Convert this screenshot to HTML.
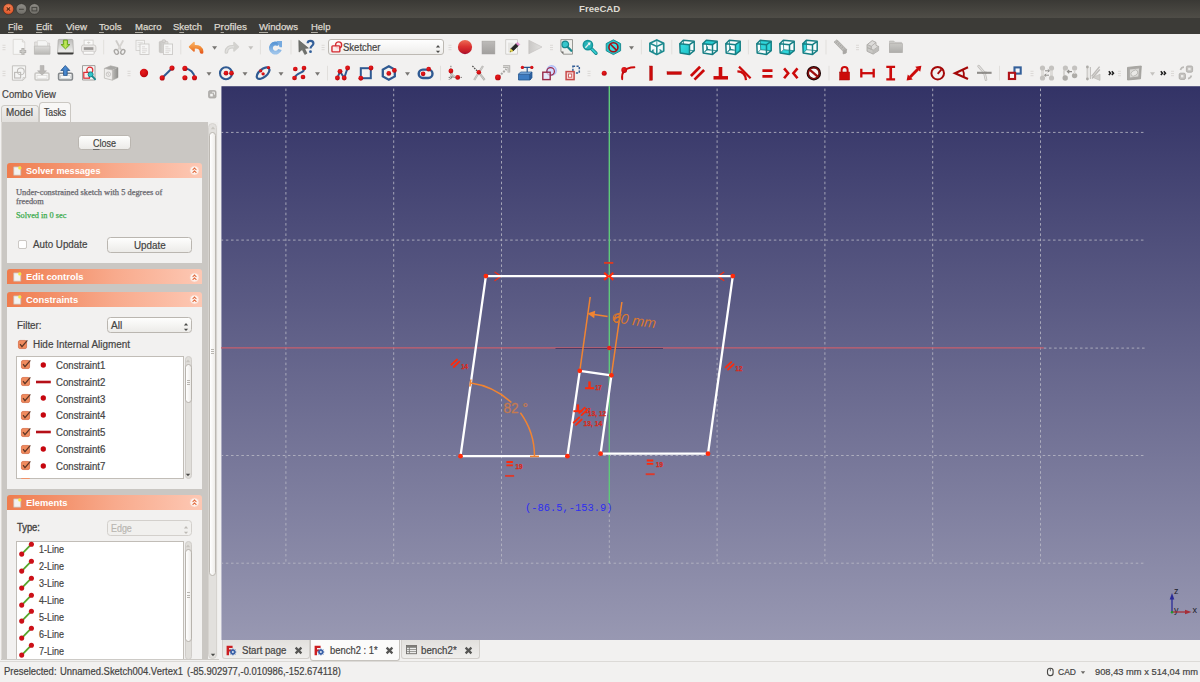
<!DOCTYPE html>
<html><head><meta charset="utf-8"><title>FreeCAD</title>
<style>html,body{margin:0;padding:0}body{width:1200px;height:682px;position:relative;overflow:hidden;background:#f2f1f0;font-family:"Liberation Sans",sans-serif}u{text-decoration:underline;text-underline-offset:1.7px;text-decoration-thickness:1px}</style></head>
<body>
<div style="position:absolute;left:0px;top:0px;width:1200px;height:18px;background:linear-gradient(#3a3935,#4f4d47);"></div>
<div style="position:absolute;left:0px;top:18px;width:1200px;height:16px;background:#3c3b37;"></div>
<svg style="position:absolute;left:0;top:0" width="50" height="18" viewBox="0 0 50 18"><defs><radialGradient id="cb" cx="0.5" cy="0.35" r="0.7"><stop offset="0" stop-color="#f58a5e"/><stop offset="1" stop-color="#dc4a1c"/></radialGradient><linearGradient id="gb" x1="0" y1="0" x2="0" y2="1"><stop offset="0" stop-color="#8f8d87"/><stop offset="1" stop-color="#6f6d67"/></linearGradient></defs><circle cx="8.4" cy="9" r="5.4" fill="url(#cb)" stroke="#3f2b22" stroke-width="0.7"/><path d="M6.7,7.3 L10.1,10.7 M10.1,7.3 L6.7,10.7" stroke="#5c2c14" stroke-width="1.15"/><circle cx="21.4" cy="9" r="5.35" fill="url(#gb)" stroke="#35342f" stroke-width="0.7"/><path d="M19,9.3 L23.8,9.3" stroke="#484742" stroke-width="1.1"/><circle cx="34.4" cy="9" r="5.35" fill="url(#gb)" stroke="#35342f" stroke-width="0.7"/><rect x="32" y="7.4" width="4.8" height="3.5" fill="none" stroke="#484742" stroke-width="1.05"/></svg>
<div style="position:absolute;left:579.00px;top:0.00px;height:18px;line-height:18px;font-family:'Liberation Sans', sans-serif;font-size:9px;color:#dfdbd2;white-space:pre;transform:scaleX(1.0725);transform-origin:0 50%;font-weight:700;">FreeCAD</div>
<div style="position:absolute;left:8.40px;top:18.00px;height:18px;line-height:18px;font-family:'Liberation Sans', sans-serif;font-size:9.3px;color:#dcd8cf;white-space:pre;transform:scaleX(0.9809);transform-origin:0 50%;-webkit-text-stroke:0.25px;"><u style="text-decoration-color:#aeaba3">F</u>ile</div>
<div style="position:absolute;left:36.00px;top:18.00px;height:18px;line-height:18px;font-family:'Liberation Sans', sans-serif;font-size:9.3px;color:#dcd8cf;white-space:pre;-webkit-text-stroke:0.25px;"><u style="text-decoration-color:#aeaba3">E</u>dit</div>
<div style="position:absolute;left:66.00px;top:18.00px;height:18px;line-height:18px;font-family:'Liberation Sans', sans-serif;font-size:9.3px;color:#dcd8cf;white-space:pre;transform:scaleX(1.0505);transform-origin:0 50%;-webkit-text-stroke:0.25px;"><u style="text-decoration-color:#aeaba3">V</u>iew</div>
<div style="position:absolute;left:99.40px;top:18.00px;height:18px;line-height:18px;font-family:'Liberation Sans', sans-serif;font-size:9.3px;color:#dcd8cf;white-space:pre;transform:scaleX(1.0456);transform-origin:0 50%;-webkit-text-stroke:0.25px;"><u style="text-decoration-color:#aeaba3">T</u>ools</div>
<div style="position:absolute;left:134.50px;top:18.00px;height:18px;line-height:18px;font-family:'Liberation Sans', sans-serif;font-size:9.3px;color:#dcd8cf;white-space:pre;transform:scaleX(1.0295);transform-origin:0 50%;-webkit-text-stroke:0.25px;"><u style="text-decoration-color:#aeaba3">M</u>acro</div>
<div style="position:absolute;left:172.70px;top:18.00px;height:18px;line-height:18px;font-family:'Liberation Sans', sans-serif;font-size:9.3px;color:#dcd8cf;white-space:pre;transform:scaleX(1.0200);transform-origin:0 50%;-webkit-text-stroke:0.25px;">S<u style="text-decoration-color:#aeaba3">k</u>etch</div>
<div style="position:absolute;left:214.00px;top:18.00px;height:18px;line-height:18px;font-family:'Liberation Sans', sans-serif;font-size:9.3px;color:#dcd8cf;white-space:pre;transform:scaleX(1.0641);transform-origin:0 50%;-webkit-text-stroke:0.25px;">P<u style="text-decoration-color:#aeaba3">r</u>ofiles</div>
<div style="position:absolute;left:259.00px;top:18.00px;height:18px;line-height:18px;font-family:'Liberation Sans', sans-serif;font-size:9.3px;color:#dcd8cf;white-space:pre;transform:scaleX(1.0337);transform-origin:0 50%;-webkit-text-stroke:0.25px;"><u style="text-decoration-color:#aeaba3">W</u>indows</div>
<div style="position:absolute;left:310.70px;top:18.00px;height:18px;line-height:18px;font-family:'Liberation Sans', sans-serif;font-size:9.3px;color:#dcd8cf;white-space:pre;transform:scaleX(1.0195);transform-origin:0 50%;-webkit-text-stroke:0.25px;"><u style="text-decoration-color:#aeaba3">H</u>elp</div>
<div style="position:absolute;left:0px;top:34px;width:1200px;height:52px;background:#f2f1f0;"></div>
<svg style="position:absolute;left:0;top:34px" width="1200" height="52" viewBox="0 34 1200 52"><defs>
<radialGradient id="rdot" cx="0.4" cy="0.35" r="0.75"><stop offset="0" stop-color="#ea1c1c"/><stop offset="0.7" stop-color="#c80a10"/><stop offset="1" stop-color="#a0060c"/></radialGradient>
<linearGradient id="ggrey" x1="0" y1="0" x2="0" y2="1"><stop offset="0" stop-color="#e3e2e0"/><stop offset="1" stop-color="#c4c3c0"/></linearGradient>
<linearGradient id="gfold" x1="0" y1="0" x2="0" y2="1"><stop offset="0" stop-color="#dddcda"/><stop offset="1" stop-color="#b9b8b5"/></linearGradient>
<linearGradient id="gdrive" x1="0" y1="0" x2="0" y2="1"><stop offset="0" stop-color="#bdbcba"/><stop offset="0.55" stop-color="#d9d9d7"/><stop offset="1" stop-color="#f0f0ee"/></linearGradient>
<linearGradient id="ggreen" x1="0" y1="0" x2="1" y2="0"><stop offset="0" stop-color="#86c626"/><stop offset="0.5" stop-color="#bfe65a"/><stop offset="1" stop-color="#86c626"/></linearGradient>
<linearGradient id="gclip" x1="0" y1="0" x2="1" y2="0"><stop offset="0" stop-color="#c6c5c2"/><stop offset="1" stop-color="#e2e1df"/></linearGradient>
<linearGradient id="gcy" x1="0" y1="0" x2="1" y2="1"><stop offset="0" stop-color="#3ae0e4"/><stop offset="1" stop-color="#1cc0c6"/></linearGradient>
<linearGradient id="ggrp" x1="0" y1="0" x2="0" y2="1"><stop offset="0" stop-color="#c9c8c5"/><stop offset="1" stop-color="#aeadaa"/></linearGradient>
<linearGradient id="gbarrow" x1="0" y1="0" x2="1" y2="0"><stop offset="0" stop-color="#2f6cb4"/><stop offset="0.5" stop-color="#4a8ad0"/><stop offset="1" stop-color="#2f6cb4"/></linearGradient>
<linearGradient id="gmap" x1="0" y1="0" x2="1" y2="0"><stop offset="0" stop-color="#bdbcb9"/><stop offset="1" stop-color="#8f8e8b"/></linearGradient>
<linearGradient id="gor" gradientUnits="userSpaceOnUse" x1="0" y1="-5" x2="0" y2="6"><stop offset="0" stop-color="#f8b066"/><stop offset="0.5" stop-color="#f08a36"/><stop offset="1" stop-color="#e4521a"/></linearGradient>
<linearGradient id="gblu" x1="0" y1="0" x2="0" y2="1"><stop offset="0" stop-color="#5a97d6"/><stop offset="1" stop-color="#9cc3ea"/></linearGradient>
<linearGradient id="grec" x1="0" y1="0" x2="0" y2="1"><stop offset="0" stop-color="#ec6c56"/><stop offset="0.45" stop-color="#dc3432"/><stop offset="0.8" stop-color="#c41c28"/><stop offset="1" stop-color="#a01034"/></linearGradient>
<linearGradient id="gstop" x1="0" y1="0" x2="0" y2="1"><stop offset="0" stop-color="#bdbbb9"/><stop offset="1" stop-color="#a19f9d"/></linearGradient>
<linearGradient id="gstop2" x1="0" y1="0" x2="1" y2="0"><stop offset="0" stop-color="#c9c7c5"/><stop offset="1" stop-color="#e3e2e0"/></linearGradient>
</defs><g transform="translate(4,47)"><path d="M-1.5,-1.7 H1.5 M-1.5,0.5 H1.5 M-1.5,2.7 H1.5" stroke="#d9d7d4" stroke-width="0.9"/></g>
<g transform="translate(20,47)"><path d="M-6.8,-7.6 H2.4 L4.8,-5 V7.4 H-6.8 Z" fill="#f6f6f5" stroke="#dad8d5" stroke-width="0.9"/><path d="M2.4,-7.6 V-5 H4.8" fill="#eeedeb" stroke="#d3d1ce" stroke-width="0.8"/><path d="M2.9,1.1 V7.7 M-0.4,4.4 H6.2" stroke="#b3b1ae" stroke-width="3"/><path d="M2.9,1.9 V6.9 M0.4,4.4 H5.4" stroke="#cbcac7" stroke-width="1.3"/></g>
<g transform="translate(42,47)"><path d="M-7.4,-5 H-3 L-2,-3.8 H7.6 V7 H-7.4 Z" fill="#e3e2e0" stroke="#cfcdca" stroke-width="0.8"/><path d="M-4.6,-6.4 H3.4 L5.5,-4.4 V0 H-4.6 Z" fill="#f5f5f4" stroke="#d6d4d1" stroke-width="0.7"/><path d="M-7.6,-0.9 H8 V7.2 H-7.6 Z" fill="url(#gfold)" stroke="#b9b7b4" stroke-width="0.7"/></g>
<g transform="translate(65.2,47)"><path d="M-6.2,-7.6 H6.8 Q7.6,-7.6 7.7,-6.6 L8.2,5.6 H-7.6 L-7,-6.6 Q-7,-7.6 -6.2,-7.6 Z" fill="url(#gdrive)" stroke="#a5a4a1" stroke-width="0.7"/><path d="M-7.7,5.5 H8.3 V6.3 Q8.3,7.5 7,7.5 H-6.4 Q-7.7,7.5 -7.7,6.3 Z" fill="#3c3c3a"/><path d="M-7,5.4 H7.6" stroke="#9d9c99" stroke-width="0.6"/><path d="M-1.8,-6.9 H2.3 V-2.5 H4.7 L0.25,1.9 L-4.2,-2.5 H-1.8 Z" fill="url(#ggreen)" stroke="#62a01a" stroke-width="0.9" stroke-linejoin="round"/></g>
<g transform="translate(88.5,47)"><rect x="-4.4" y="-6.9" width="9" height="6" fill="#fafaf9" stroke="#cfcdca" stroke-width="0.8"/><path d="M-1.4,-4.4 H1.8 M0.2,-5.4 V-3.2" stroke="#d0cecb" stroke-width="0.9"/><rect x="-7" y="-2" width="14.4" height="7.2" rx="2" fill="#eceae8" stroke="#c6c4c1" stroke-width="0.8"/><rect x="-4.7" y="0.2" width="9.6" height="2.7" fill="#9d9b98"/><rect x="-5.2" y="4.2" width="10.8" height="3.1" rx="0.6" fill="#fbfbfa" stroke="#c6c4c1" stroke-width="0.8"/></g>
<g transform="translate(103.7,47)"><path d="M0,-7.2 V7.4" stroke="#e1dfdc" stroke-width="1"/></g>
<g transform="translate(119,47)"><path d="M-3,-6.6 L2,2.6" stroke="#cdcbc8" stroke-width="1.9" fill="none"/><path d="M4.2,-6.6 L-0.8,2.6" stroke="#d6d4d1" stroke-width="1.9" fill="none"/><ellipse cx="-2.6" cy="4.9" rx="1.9" ry="2.5" fill="none" stroke="#a9a7a4" stroke-width="1.4" transform="rotate(-28 -2.6 4.9)"/><ellipse cx="3.8" cy="4.9" rx="1.9" ry="2.5" fill="none" stroke="#a9a7a4" stroke-width="1.4" transform="rotate(28 3.8 4.9)"/></g>
<g transform="translate(142,47)"><rect x="-6" y="-6.7" width="8.5" height="10.2" fill="#f4f4f3" stroke="#cfcdca" stroke-width="0.8"/><path d="M-4.4,-4.4 H0.8 M-4.4,-2.4 H0.8 M-4.4,-0.4 H-2.4" stroke="#dad8d5" stroke-width="0.8"/><rect x="-2" y="-3" width="9" height="10.4" fill="#f6f6f5" stroke="#c7c5c2" stroke-width="0.8"/><path d="M0,-0.2 H3 M0,1.8 H5.2 M0,3.8 H5.2 M0,5.6 H3.6" stroke="#d3d1ce" stroke-width="0.8"/></g>
<g transform="translate(165,47)"><rect x="-5.7" y="-5.6" width="8.6" height="11.2" rx="1" fill="url(#gclip)" stroke="#c1bfbc" stroke-width="0.7"/><rect x="-3" y="-7.2" width="3.6" height="2.6" rx="1" fill="#d8d7d4" stroke="#bdbbb8" stroke-width="0.6"/><rect x="-1.6" y="-3" width="9.2" height="10.4" fill="#f6f6f5" stroke="#c7c5c2" stroke-width="0.8"/><path d="M0.4,-0.2 H3.4 M0.4,1.8 H5.6 M0.4,3.8 H5.6 M0.4,5.6 H4" stroke="#d3d1ce" stroke-width="0.8"/></g>
<g transform="translate(180.8,47)"><path d="M0,-7.2 V7.4" stroke="#e1dfdc" stroke-width="1"/></g>
<g transform="translate(196,47)"><g transform="translate(0,0.6)"><path d="M5.6,4.4 C5.4,0.6 2.6,-1.2 -1.4,-0.8" fill="none" stroke="url(#gor)" stroke-width="3.7" stroke-linecap="round"/><path d="M-6.4,-0.8 L-2,-5 V3.4 Z" fill="url(#gor)" stroke="url(#gor)" stroke-width="1.6" stroke-linejoin="round"/></g></g>
<g transform="translate(214.6,47.5)"><path d="M-2.5,-1.3 H2.5 L0,2.3 Z" fill="#777572"/></g>
<g transform="translate(232,47)"><g transform="translate(0,0.6) scale(-1,1)"><path d="M5.6,4.4 C5.4,0.6 2.6,-1.2 -1.4,-0.8" fill="none" stroke="#cfcecb" stroke-width="3.7" stroke-linecap="round"/><path d="M-6.4,-0.8 L-2,-5 V3.4 Z" fill="#d3d2cf" stroke="#d3d2cf" stroke-width="1.6" stroke-linejoin="round"/><path d="M5.6,4.4 C5.4,0.6 2.6,-1.2 -1.4,-0.8" fill="none" stroke="#e0dfdd" stroke-width="1.6" stroke-linecap="round"/></g></g>
<g transform="translate(250.8,47.5)"><path d="M-2.5,-1.3 H2.5 L0,2.3 Z" fill="#c4c2bf"/></g>
<g transform="translate(260.4,47)"><path d="M0,-7.2 V7.4" stroke="#e1dfdc" stroke-width="1"/></g>
<g transform="translate(275,47)"><g transform="translate(0.3,0.9)"><path d="M3.4,-3.2 A4.6,4.6 0 1 0 4.6,1.6" fill="none" stroke="url(#gblu)" stroke-width="3.9"/><path d="M1.2,-6.9 H6.7 V-0.6 H4.4 Z" fill="#76aadf"/></g></g>
<g transform="translate(291,47)"><path d="M0,-7.2 V7.4" stroke="#e1dfdc" stroke-width="1"/></g>
<g transform="translate(307,47)"><g transform="translate(0,0.7)"><path d="M-8.2,-7.4 L-8,4.4 L-4.8,1.8 L-2.2,6.8 L0,5.6 L-2.4,0.8 L1.4,0.4 Z" fill="#70726e" stroke="#5a5c58" stroke-width="0.6"/><path d="M0.6,-4.4 C0.8,-7.6 6.4,-7.6 6.4,-4.2 C6.4,-2 3.5,-1.8 3.5,0.8" fill="none" stroke="#34609a" stroke-width="2.2"/><circle cx="3.5" cy="4" r="1.4" fill="#34609a"/></g></g>
<g transform="translate(323.1,47)"><path d="M-1.5,-1.7 H1.5 M-1.5,0.5 H1.5 M-1.5,2.7 H1.5" stroke="#d9d7d4" stroke-width="0.9"/></g>
<g transform="translate(450,47)"><path d="M-1.5,-1.7 H1.5 M-1.5,0.5 H1.5 M-1.5,2.7 H1.5" stroke="#d9d7d4" stroke-width="0.9"/></g>
<g transform="translate(465,47)"><circle cx="0" cy="0.1" r="7.1" fill="url(#grec)"/></g>
<g transform="translate(488.45,47)"><rect x="-6.45" y="-5.9" width="12.9" height="12.9" fill="url(#gstop)" stroke="#a3a19e" stroke-width="0.5"/></g>
<g transform="translate(512.5,47)"><path d="M-6.8,-7.4 H5 V7.2 H-6.8 Z" fill="#f6f6f5" stroke="#d2d0cd" stroke-width="1"/><rect x="-4.6" y="-4.4" width="5.6" height="9.6" fill="#e6e5e3"/><path d="M3.6,-3.4 L5.8,-1.2 L0.6,4 L-1.6,1.8 Z" fill="#262626" stroke="#262626" stroke-width="0.8" stroke-linejoin="round"/><path d="M3.6,-3.4 L5,-4.8 L7.2,-2.6 L5.8,-1.2 Z" fill="#e58fd0" stroke="#d47cc0" stroke-width="0.5"/><path d="M-1.6,1.8 L0.6,4 L-2.6,5.2 Z" fill="#e8d848" stroke="#c9b930" stroke-width="0.5"/><path d="M-2.6,5.2 L-1.9,4 L-1.5,4.8 Z" fill="#333"/></g>
<g transform="translate(535,47)"><path d="M-6.2,-6.8 L7,0 L-6.2,6.8 Z" fill="url(#gstop2)" stroke="#c2c0bd" stroke-width="0.6"/></g>
<g transform="translate(551.5,47)"><path d="M-1.5,-1.7 H1.5 M-1.5,0.5 H1.5 M-1.5,2.7 H1.5" stroke="#d9d7d4" stroke-width="0.9"/></g>
<g transform="translate(566.9,47)"><path d="M-6,-7.4 H5.6 V7.2 H-3.4 L-6,4.6 Z" fill="#efefec" stroke="#8f8e8a" stroke-width="0.9"/><path d="M-6,4.6 H-3.4 V7.2 Z" fill="#6c6b68"/><circle cx="-1.6" cy="-2.6" r="3.3" fill="#34c6cb" stroke="#17888d" stroke-width="1.2"/><path d="M0.8,0 L4.4,3.8" stroke="#17888d" stroke-width="2.2" stroke-linecap="round"/></g>
<g transform="translate(590,47)"><path d="M1.4,1.6 L6,6.2" stroke="#16898e" stroke-width="3.4" stroke-linecap="round"/><path d="M1.6,1.8 L5.9,6.1" stroke="#35cdd2" stroke-width="1.7" stroke-linecap="round"/><circle cx="-2.1" cy="-1.85" r="4.6" fill="#27b4b9" stroke="#169499" stroke-width="1.5"/><path d="M-4.6,0.8 L-0.6,-3.6" stroke="#e8eeee" stroke-width="1.3"/><path d="M0.6,-4.8 L0,-1.6 L-2.6,-4.2 Z" fill="#f2f6f6"/></g>
<g transform="translate(613,47)"><g transform="translate(0.4,0.2)"><path d="M0,-7.4 L7.2,-3.6 V3.6 L0,7.4 L-7.2,3.6 V-3.6 Z" fill="#25c4c9" stroke="#14868b" stroke-width="0.9"/><circle cx="0" cy="0" r="4.5" fill="#3addE2" stroke="#a51016" stroke-width="1.6"/><path d="M-3.2,-3.2 L3.2,3.2" stroke="#a51016" stroke-width="1.6"/></g></g>
<g transform="translate(631.5,47.5)"><path d="M-2.5,-1.3 H2.5 L0,2.3 Z" fill="#777572"/></g>
<g transform="translate(641.4,47)"><path d="M0,-7.2 V7.4" stroke="#e1dfdc" stroke-width="1"/></g>
<g transform="translate(656,47)"><g transform="translate(0.8,0.2)"><path d="M0,-7.3 L6.9,-3.9 V3.9 L0,7.3 L-6.9,3.9 V-3.9 Z" fill="#f6fbfb" stroke="#1d8a8f" stroke-width="1.7" stroke-linejoin="round"/><path d="M-6.9,-3.9 L0,-0.7 L6.9,-3.9 M0,-0.7 V7.3" stroke="#1d8a8f" stroke-width="1.5" fill="none"/><path d="M0,-7.3 V-0.7" stroke="#1d8a8f" stroke-width="0.8"/><path d="M-4.8,4.2 L-2.6,2.4 M-4.8,4.2 L-3.8,2.2 M-4.8,4.2 L-2.6,4 M4.8,4.2 L2.6,2.4 M4.8,4.2 L3.8,2.2 M4.8,4.2 L2.6,4" stroke="#1d8a8f" stroke-width="0.9"/></g></g>
<g transform="translate(671.8,47)"><path d="M0,-7.2 V7.4" stroke="#e1dfdc" stroke-width="1"/></g>
<g transform="translate(687,47)"><g transform="translate(0,0.2)"><path d="M-7.2,-3.5 L-3.7,-6.9 L7.2,-5.9 L7.2,3.5 L2.5,7.2 L-6.8,5.8 Z" fill="#f8fcfc"/><path d="M-6.8,5.8 L-3.3,2.5 L7.2,3.5 M-3.3,2.5 L-3.7,-6.9" stroke="#167f84" stroke-width="0.8" fill="none"/><path d="M-7.2,-3.5 L2.5,-2.5 L2.5,7.2 L-6.8,5.8 Z" fill="url(#gcy)"/><path d="M-7.2,-3.5 L2.5,-2.5 L2.5,7.2 L-6.8,5.8 Z" fill="none" stroke="#167f84" stroke-width="1.5" stroke-linejoin="round"/><path d="M-7.2,-3.5 L-3.7,-6.9 L7.2,-5.9 L7.2,3.5 L2.5,7.2 M2.5,-2.5 L7.2,-5.9" stroke="#167f84" stroke-width="1.5" fill="none" stroke-linejoin="round"/></g></g>
<g transform="translate(710,47)"><g transform="translate(0,0.2)"><path d="M-7.2,-3.5 L-3.7,-6.9 L7.2,-5.9 L7.2,3.5 L2.5,7.2 L-6.8,5.8 Z" fill="#f8fcfc"/><path d="M-6.8,5.8 L-3.3,2.5 L7.2,3.5 M-3.3,2.5 L-3.7,-6.9" stroke="#167f84" stroke-width="0.8" fill="none"/><path d="M-7.2,-3.5 L-3.7,-6.9 L7.2,-5.9 L2.5,-2.5 Z" fill="url(#gcy)"/><path d="M-2.6,2.2 L-5,4.4 M-2.6,2.2 L-2.6,-0.8 M-2.6,2.2 L0.6,2.8" stroke="#167f84" stroke-width="0.9" fill="none"/><circle cx="-2.6" cy="2.2" r="0.9" fill="#167f84"/><path d="M-7.2,-3.5 L2.5,-2.5 L2.5,7.2 L-6.8,5.8 Z" fill="none" stroke="#167f84" stroke-width="1.5" stroke-linejoin="round"/><path d="M-7.2,-3.5 L-3.7,-6.9 L7.2,-5.9 L7.2,3.5 L2.5,7.2 M2.5,-2.5 L7.2,-5.9" stroke="#167f84" stroke-width="1.5" fill="none" stroke-linejoin="round"/></g></g>
<g transform="translate(733,47)"><g transform="translate(0,0.2)"><path d="M-7.2,-3.5 L-3.7,-6.9 L7.2,-5.9 L7.2,3.5 L2.5,7.2 L-6.8,5.8 Z" fill="#f8fcfc"/><path d="M-6.8,5.8 L-3.3,2.5 L7.2,3.5 M-3.3,2.5 L-3.7,-6.9" stroke="#167f84" stroke-width="0.8" fill="none"/><path d="M2.5,-2.5 L7.2,-5.9 L7.2,3.5 L2.5,7.2 Z" fill="url(#gcy)"/><path d="M-2.6,2.2 L-5,4.4 M-2.6,2.2 L-2.6,-0.8 M-2.6,2.2 L0.6,2.8" stroke="#167f84" stroke-width="0.9" fill="none"/><circle cx="-2.6" cy="2.2" r="0.9" fill="#167f84"/><path d="M-7.2,-3.5 L2.5,-2.5 L2.5,7.2 L-6.8,5.8 Z" fill="none" stroke="#167f84" stroke-width="1.5" stroke-linejoin="round"/><path d="M-7.2,-3.5 L-3.7,-6.9 L7.2,-5.9 L7.2,3.5 L2.5,7.2 M2.5,-2.5 L7.2,-5.9" stroke="#167f84" stroke-width="1.5" fill="none" stroke-linejoin="round"/></g></g>
<g transform="translate(748.4,47)"><path d="M0,-7.2 V7.4" stroke="#e1dfdc" stroke-width="1"/></g>
<g transform="translate(764,47)"><g transform="translate(0,0.2)"><path d="M-7.2,-3.5 L-3.7,-6.9 L7.2,-5.9 L7.2,3.5 L2.5,7.2 L-6.8,5.8 Z" fill="#f8fcfc"/><path d="M-3.7,-6.9 L7.2,-5.9 L7.2,3.5 L-3.3,2.5 Z" fill="#2fd6db"/><path d="M-6.8,5.8 L-3.3,2.5 L7.2,3.5 M-3.3,2.5 L-3.7,-6.9" stroke="#167f84" stroke-width="0.8" fill="none"/><path d="M-7.2,-3.5 L2.5,-2.5 L2.5,7.2 L-6.8,5.8 Z" fill="none" stroke="#167f84" stroke-width="1.5" stroke-linejoin="round"/><path d="M-7.2,-3.5 L-3.7,-6.9 L7.2,-5.9 L7.2,3.5 L2.5,7.2 M2.5,-2.5 L7.2,-5.9" stroke="#167f84" stroke-width="1.5" fill="none" stroke-linejoin="round"/></g></g>
<g transform="translate(787,47)"><g transform="translate(0,0.2)"><path d="M-7.2,-3.5 L-3.7,-6.9 L7.2,-5.9 L7.2,3.5 L2.5,7.2 L-6.8,5.8 Z" fill="#f8fcfc"/><path d="M-6.8,5.8 L-3.3,2.5 L7.2,3.5 L2.5,7.2 Z" fill="#2fd6db"/><path d="M-6.8,5.8 L-3.3,2.5 L7.2,3.5 M-3.3,2.5 L-3.7,-6.9" stroke="#167f84" stroke-width="0.8" fill="none"/><path d="M-7.2,-3.5 L2.5,-2.5 L2.5,7.2 L-6.8,5.8 Z" fill="none" stroke="#167f84" stroke-width="1.5" stroke-linejoin="round"/><path d="M-7.2,-3.5 L-3.7,-6.9 L7.2,-5.9 L7.2,3.5 L2.5,7.2 M2.5,-2.5 L7.2,-5.9" stroke="#167f84" stroke-width="1.5" fill="none" stroke-linejoin="round"/></g></g>
<g transform="translate(810,47)"><g transform="translate(0,0.2)"><path d="M-7.2,-3.5 L-3.7,-6.9 L7.2,-5.9 L7.2,3.5 L2.5,7.2 L-6.8,5.8 Z" fill="#f8fcfc"/><path d="M-7.2,-3.5 L-3.7,-6.9 L-3.3,2.5 L-6.8,5.8 Z" fill="#2fd6db"/><path d="M-6.8,5.8 L-3.3,2.5 L7.2,3.5 M-3.3,2.5 L-3.7,-6.9" stroke="#167f84" stroke-width="0.8" fill="none"/><path d="M-7.2,-3.5 L2.5,-2.5 L2.5,7.2 L-6.8,5.8 Z" fill="none" stroke="#167f84" stroke-width="1.5" stroke-linejoin="round"/><path d="M-7.2,-3.5 L-3.7,-6.9 L7.2,-5.9 L7.2,3.5 L2.5,7.2 M2.5,-2.5 L7.2,-5.9" stroke="#167f84" stroke-width="1.5" fill="none" stroke-linejoin="round"/></g></g>
<g transform="translate(826,47)"><path d="M0,-7.2 V7.4" stroke="#e1dfdc" stroke-width="1"/></g>
<g transform="translate(840,47)"><path d="M-6,-5 L-3,-7.2 L6.6,2.4 L6.2,6 L3.2,7 L3,4.2 Z" fill="#bcbbb8" stroke="#a9a7a4" stroke-width="0.7" stroke-linejoin="round"/><path d="M3,4.2 L6.6,2.4" stroke="#a19f9c" stroke-width="0.7"/><path d="M-3.8,-4.4 L-2.4,-5.6 M-2,-2.6 L-0.6,-3.8 M-0.2,-0.8 L1.2,-2 M1.6,1 L3,-0.2 M3.4,2.8 L4.8,1.6" stroke="#9c9a97" stroke-width="0.7"/><path d="M3.2,7 L3,4.2 L6.6,2.4 L6.2,6 Z" fill="#a9a7a4"/></g>
<g transform="translate(857.5,47)"><path d="M-1.5,-1.7 H1.5 M-1.5,0.5 H1.5 M-1.5,2.7 H1.5" stroke="#d9d7d4" stroke-width="0.9"/></g>
<g transform="translate(872.5,47)"><g transform="translate(0.3,0.2)"><path d="M-5.6,-2.6 L-0.6,-6.6 L3.2,-4.8 V-1.8 L5.8,-0.8 V3.4 L0.4,6.8 L-5.6,4 Z" fill="#dddcda" stroke="#a9a7a4" stroke-width="0.9" stroke-linejoin="round"/><path d="M-5.6,-2.6 L-1.6,-0.8 L3.2,-4.8 M-1.6,-0.8 V2 L0.4,3 L5.8,-0.8 M0.4,3 V6.8 M-1.6,2 L-5.6,0.4" stroke="#a9a7a4" stroke-width="0.8" fill="none"/><path d="M-5.6,-2.6 L-1.6,-0.8 V2 L-5.6,0.4 Z M-5.6,0.4 L0.4,3 V6.8 L-5.6,4 Z" fill="#c9c8c5" stroke="#a9a7a4" stroke-width="0.6"/><path d="M0.4,3 L5.8,-0.8 V3.4 L0.4,6.8 Z" fill="#bdbcb9"/></g></g>
<g transform="translate(895,47)"><g transform="translate(1,0)"><path d="M-6.5,-6 H-2.2 L-1,-4.6 H5.6 V5.4 H-6.5 Z" fill="#c9c8c5" stroke="#b7b5b2" stroke-width="0.6"/><path d="M-6.5,-3.4 H6.5 V5.5 H-6.5 Z" fill="url(#ggrp)" stroke="#aeaca9" stroke-width="0.6"/></g></g>
<g transform="translate(4,73)"><path d="M-1.5,-1.7 H1.5 M-1.5,0.5 H1.5 M-1.5,2.7 H1.5" stroke="#d9d7d4" stroke-width="0.9"/></g>
<g transform="translate(19,73)"><path d="M-6.6,-7.2 H6.6 V4.6 L4,7.2 H-6.6 Z" fill="#f4f4f3" stroke="#c4c2bf" stroke-width="1"/><circle cx="1.8" cy="-1.6" r="3.4" fill="none" stroke="#bdbbb8" stroke-width="1.1"/><rect x="-4.4" y="-0.6" width="6" height="5.6" fill="none" stroke="#bdbbb8" stroke-width="1.1"/><path d="M4,7.2 V4.6 H6.6" fill="none" stroke="#c4c2bf" stroke-width="0.8"/></g>
<g transform="translate(42,73)"><rect x="-7" y="0" width="14" height="7" rx="1.2" fill="#f6f6f5" stroke="#c9c7c4" stroke-width="1.5"/><path d="M-1.8,-7.5 H2 V-2.2 H4.5 L0.1,2.2 L-4.5,-2.2 H-1.8 Z" fill="#b9b7b4" stroke="#adaba8" stroke-width="0.5"/><rect x="-5" y="2.6" width="10" height="2.6" fill="#fafaf9" stroke="#d6d4d1" stroke-width="0.6"/></g>
<g transform="translate(65.5,73)"><rect x="-6.9" y="0.2" width="13.8" height="6.8" rx="1.2" fill="#f4f5f5" stroke="#84888b" stroke-width="1.6"/><rect x="-4.8" y="2.8" width="9.6" height="2.4" fill="#fbfbfb" stroke="#b9bcbe" stroke-width="0.5"/><path d="M-2,2.4 H1.7 V-2.5 H4.3 L-0.2,-7.5 L-4.7,-2.5 H-2 Z" fill="url(#gbarrow)" stroke="#2a568c" stroke-width="0.8" stroke-linejoin="round"/></g>
<g transform="translate(89,73)"><path d="M-6.5,-7.4 H6 V7 H-6.5 Z" fill="#f4f4f3" stroke="#a19f9c" stroke-width="1"/><circle cx="0.8" cy="-2.8" r="3" fill="none" stroke="#dc2c32" stroke-width="1.2"/><rect x="-5.2" y="-0.6" width="5.6" height="5.8" fill="#fbeaea" stroke="#dc2c32" stroke-width="1.2"/><circle cx="1.6" cy="1.4" r="2.5" fill="#2fc5ca" stroke="#17888d" stroke-width="1"/><path d="M3.4,3.4 L6,6.2" stroke="#17888d" stroke-width="1.9" stroke-linecap="round"/></g>
<g transform="translate(111,73)"><path d="M-6.6,-4.6 L-0.4,-7.2 L7,-5.4 V4.6 L1.4,7.2 L-6.6,5.2 Z" fill="#efeeec" stroke="#bdbbb8" stroke-width="0.8" stroke-linejoin="round"/><path d="M-0.4,-7.2 L7,-5.4 L1.4,-3 L-6.6,-4.6 Z" fill="#a9a8a5"/><path d="M1.4,-3 L7,-5.4 V4.6 L1.4,7.2 Z" fill="url(#gmap)"/><path d="M-6.6,-4.6 L1.4,-3 V7.2" fill="none" stroke="#b7b5b2" stroke-width="0.7"/><circle cx="-2.6" cy="1.2" r="2.2" fill="none" stroke="#c4c2bf" stroke-width="0.9"/><path d="M-3.6,0.2 C-1.6,-0.4 -3.6,2.6 -1.6,2.2" stroke="#c4c2bf" stroke-width="0.8" fill="none"/></g>
<g transform="translate(129,73)"><path d="M-1.5,-1.7 H1.5 M-1.5,0.5 H1.5 M-1.5,2.7 H1.5" stroke="#d9d7d4" stroke-width="0.9"/></g>
<g transform="translate(144,73)"><circle cx="0" cy="0" r="4.15" fill="url(#rdot)"/></g>
<g transform="translate(167,73)"><path d="M-4.6,4.8 L5,-4.8" stroke="#2f5a92" stroke-width="2"/><circle cx="-4.8" cy="4.9" r="2.55" fill="url(#rdot)"/><circle cx="5" cy="-4.9" r="2.55" fill="url(#rdot)"/></g>
<g transform="translate(189.5,73)"><path d="M-4.6,-4.6 C0.6,-4.2 4.6,-0.6 5,4.8" stroke="#2f5a92" stroke-width="2" fill="none"/><circle cx="-4.6" cy="-4.6" r="2.55" fill="url(#rdot)"/><circle cx="-4.6" cy="4.8" r="2.55" fill="url(#rdot)"/><circle cx="5" cy="4.8" r="2.55" fill="url(#rdot)"/></g>
<g transform="translate(209,73.5)"><path d="M-2.5,-1.3 H2.5 L0,2.3 Z" fill="#777572"/></g>
<g transform="translate(226,73)"><circle cx="0" cy="0.2" r="6" fill="none" stroke="#2f5a92" stroke-width="2.1"/><circle cx="0" cy="0.2" r="2.35" fill="url(#rdot)"/><circle cx="5.5" cy="0.2" r="2.35" fill="url(#rdot)"/></g>
<g transform="translate(245,73.5)"><path d="M-2.5,-1.3 H2.5 L0,2.3 Z" fill="#777572"/></g>
<g transform="translate(262.5,73)"><g transform="translate(0.6,0.2)"><ellipse cx="0" cy="0" rx="7.6" ry="3.9" fill="none" stroke="#2f5a92" stroke-width="2.2" transform="rotate(-40)"/><circle cx="-2.4" cy="-2.4" r="1.65" fill="url(#rdot)"/><circle cx="0" cy="0.6" r="1.65" fill="url(#rdot)"/><circle cx="5.4" cy="-5.6" r="1.65" fill="url(#rdot)"/></g></g>
<g transform="translate(281,73.5)"><path d="M-2.5,-1.3 H2.5 L0,2.3 Z" fill="#777572"/></g>
<g transform="translate(299,73)"><g transform="translate(0.5,0.4)"><path d="M4.4,-3.6 C3.6,0.4 -2.6,-1.6 -4.6,4" stroke="#2f5a92" stroke-width="2" fill="none"/><circle cx="-4.2" cy="-4.4" r="2.35" fill="url(#rdot)"/><circle cx="4.5" cy="-5.4" r="2.35" fill="url(#rdot)"/><circle cx="-5" cy="4.6" r="2.35" fill="url(#rdot)"/><circle cx="3.5" cy="3.6" r="2.35" fill="url(#rdot)"/></g></g>
<g transform="translate(317.5,73.5)"><path d="M-2.5,-1.3 H2.5 L0,2.3 Z" fill="#777572"/></g>
<g transform="translate(327.5,73)"><path d="M0,-7.2 V7.4" stroke="#e1dfdc" stroke-width="1"/></g>
<g transform="translate(342.4,73)"><path d="M-5,5 L-2.4,-1.6 L1.8,5 L5.2,-5" stroke="#2f5a92" stroke-width="2" fill="none"/><circle cx="-5" cy="5" r="2.45" fill="url(#rdot)"/><circle cx="-2.4" cy="-1.6" r="2.45" fill="url(#rdot)"/><circle cx="1.8" cy="5" r="2.45" fill="url(#rdot)"/><circle cx="5.2" cy="-5" r="2.45" fill="url(#rdot)"/></g>
<g transform="translate(366,73)"><rect x="-5.2" y="-4.8" width="10" height="10" fill="none" stroke="#2f5a92" stroke-width="2"/><circle cx="-5.2" cy="5.2" r="2.45" fill="url(#rdot)"/><circle cx="5" cy="-5" r="2.45" fill="url(#rdot)"/></g>
<g transform="translate(389.8,73)"><path d="M-1,-6.8 L5,-3.4 V3.4 L-1,6.8 L-7,3.4 V-3.4 Z" fill="none" stroke="#2f5a92" stroke-width="2.3"/><circle cx="-1" cy="0.4" r="2.35" fill="url(#rdot)"/><circle cx="4.6" cy="-2.6" r="2.35" fill="url(#rdot)"/></g>
<g transform="translate(407.5,73.5)"><path d="M-2.5,-1.3 H2.5 L0,2.3 Z" fill="#777572"/></g>
<g transform="translate(425.7,73)"><rect x="-7" y="-3.4" width="13.8" height="8.4" rx="4.2" fill="none" stroke="#2f5a92" stroke-width="2.4"/><circle cx="-2.6" cy="0.8" r="2.35" fill="url(#rdot)"/><circle cx="3" cy="-3.8" r="2.35" fill="url(#rdot)"/></g>
<g transform="translate(440.5,73)"><path d="M0,-7.2 V7.4" stroke="#e1dfdc" stroke-width="1"/></g>
<g transform="translate(454.5,73)"><path d="M-3.6,-7.2 V6.8 M-5.8,4.4 H7.4" stroke="#55534f" stroke-width="0.8" stroke-dasharray="1.4 1"/><path d="M-3.6,-2 C-3.2,2 0,4.2 3.2,4.4" stroke="#a9a7a4" stroke-width="2.2" fill="none"/><path d="M-3.6,-2 C-3.2,2 0,4.2 3.2,4.4" stroke="#e4e3e1" stroke-width="0.8" fill="none"/><path d="M-5.6,6.8 L-1.6,2.6" stroke="#55534f" stroke-width="0.7" stroke-dasharray="1.2 0.8"/><circle cx="-3.6" cy="-2" r="2.4" fill="url(#rdot)"/><circle cx="3.2" cy="4.4" r="2.4" fill="url(#rdot)"/></g>
<g transform="translate(479,73)"><path d="M-0.2,-0.6 L5.6,7" stroke="#b1afab" stroke-width="2.2"/><path d="M4,-7 L-4.8,7" stroke="#b7b5b2" stroke-width="2.2"/><path d="M-0.2,-0.6 L5.4,6.8 M3.8,-6.6 L-4.6,6.8" stroke="#d9d8d5" stroke-width="0.7"/><path d="M-6.6,-7 L-1.6,-1.8" stroke="#4a4846" stroke-width="1.2" stroke-dasharray="1.6 1"/><circle cx="-0.2" cy="-0.8" r="2.25" fill="url(#rdot)"/></g>
<g transform="translate(502.5,73)"><path d="M-3.6,3.6 L4,-4" stroke="#a9a7a4" stroke-width="2" stroke-dasharray="2 1.1"/><path d="M0.6,-6.4 H6.4 V-0.6" fill="none" stroke="#a9a7a4" stroke-width="2.6"/><path d="M0.6,-6.4 H6.4 V-0.6" fill="none" stroke="#d6d5d2" stroke-width="1.1"/><circle cx="-4.6" cy="4.4" r="2.85" fill="url(#rdot)"/></g>
<g transform="translate(525,73)"><path d="M-6.5,1.2 H5 V7 H-6.5 Z" fill="#3d7cc2" stroke="#24558e" stroke-width="0.8"/><path d="M-6.5,1.2 L-4.4,-1 H7 L5,1.2 Z" fill="#7fb1e3" stroke="#24558e" stroke-width="0.7"/><path d="M5,1.2 L7,-1 V4.8 L5,7 Z" fill="#2d64a6" stroke="#24558e" stroke-width="0.7"/><path d="M-2.4,-5.6 H6.6 M2.2,-5.6 V-0.8" stroke="#24558e" stroke-width="1.2"/><circle cx="-2.6" cy="-5.6" r="1.65" fill="url(#rdot)"/><circle cx="6.8" cy="-5.6" r="1.65" fill="url(#rdot)"/></g>
<g transform="translate(549,73)"><circle cx="2.6" cy="-2.6" r="4.6" fill="#d4ddff" stroke="#aebcf6" stroke-width="1.4"/><circle cx="1.6" cy="-1.6" r="3.8" fill="none" stroke="#9a2a4a" stroke-width="1.2"/><rect x="-6.2" y="-0.8" width="7.4" height="7.4" fill="#dfe6ff" fill-opacity="0.7" stroke="#9a2a4a" stroke-width="1.4"/></g>
<g transform="translate(572.5,73)"><rect x="0.4" y="-6.8" width="6.4" height="6.8" fill="none" stroke="#345f97" stroke-width="1.5" stroke-dasharray="2.2 1.4"/><rect x="-6.4" y="-1.4" width="8" height="8" fill="#f6d6d6" stroke="#c84a4a" stroke-width="1.5"/><rect x="-4" y="1" width="3.2" height="3.2" fill="#ffffff" stroke="#c84a4a" stroke-width="0.8"/></g>
<g transform="translate(589,73)"><path d="M-1.5,-1.7 H1.5 M-1.5,0.5 H1.5 M-1.5,2.7 H1.5" stroke="#d9d7d4" stroke-width="0.9"/></g>
<g transform="translate(604.5,73)"><circle cx="-0.3" cy="0.2" r="2.5" fill="url(#rdot)"/></g>
<g transform="translate(626,73)"><path d="M-3.8,6.2 C-4.6,0.6 -2.4,-5.6 8.4,-5.8" fill="none" stroke="#cc0a0a" stroke-width="1.9" stroke-linecap="round"/><circle cx="-1.8" cy="-3" r="2.9" fill="url(#rdot)"/></g>
<g transform="translate(651,73)"><rect x="-1.4" y="-7" width="2.9" height="14.3" fill="#cc0a0a" stroke="#a40808" stroke-width="0.4"/></g>
<g transform="translate(674,73)"><rect x="-7" y="-1.3" width="14.4" height="2.8" fill="#cc0a0a" stroke="#a40808" stroke-width="0.4"/></g>
<g transform="translate(697.5,73)"><path d="M-6.6,3 L2.6,-6.2 M-3,6.6 L6.6,-3" stroke="#cc0a0a" stroke-width="2.7"/></g>
<g transform="translate(720.5,73)"><path d="M-7,4.8 H7.5" stroke="#cc0a0a" stroke-width="3.5"/><path d="M0,4.8 V-6" stroke="#cc0a0a" stroke-width="3.6"/></g>
<g transform="translate(744,73)"><path d="M-5,-6.4 L6.6,5.2" stroke="#cc0a0a" stroke-width="2.2"/><path d="M-6.6,-1.6 C-1,-1.6 1.6,2 2,7.2" fill="none" stroke="#cc0a0a" stroke-width="2.2"/></g>
<g transform="translate(767,73)"><path d="M-4.6,-2.4 H5.5 M-4.6,3.4 H5.5" stroke="#cc0a0a" stroke-width="2.8"/></g>
<g transform="translate(790.5,73)"><path d="M-6.4,-4.7 L-2.3,0.2 L-6.4,5.3" fill="none" stroke="#cc0a0a" stroke-width="2.6"/><path d="M7,-4.7 L2.9,0.2 L7,5.3" fill="none" stroke="#cc0a0a" stroke-width="2.6"/></g>
<g transform="translate(814,73)"><g transform="translate(-0.2,0.2)"><circle cx="0" cy="0" r="6" fill="#f8f4f4" stroke="#1c0505" stroke-width="2.5"/><circle cx="0" cy="0" r="5.6" fill="none" stroke="#8a0c0c" stroke-width="1.3"/><path d="M-4,-3.4 L4,3.4" stroke="#a01010" stroke-width="2.4"/></g></g>
<g transform="translate(829,73)"><path d="M0,-7.2 V7.4" stroke="#e1dfdc" stroke-width="1"/></g>
<g transform="translate(844,73)"><g transform="translate(0.6,0.2)"><path d="M-3,-1 V-3.2 C-3,-7.2 3,-7.2 3,-3.2 V-1" fill="none" stroke="#cc0a0a" stroke-width="2"/><rect x="-5" y="-1.2" width="10" height="8" fill="#cc0a0a" stroke="#a40808" stroke-width="0.5"/></g></g>
<g transform="translate(867.5,73)"><path d="M-6.4,0.2 H6.4" stroke="#cc0a0a" stroke-width="2.3"/><path d="M-6.2,-4.2 V4.6 M6.2,-4.2 V4.6" stroke="#cc0a0a" stroke-width="2.3" fill="none"/></g>
<g transform="translate(890.5,73)"><path d="M0.2,-6.4 V6.4" stroke="#cc0a0a" stroke-width="2.7"/><path d="M-4.2,-6.2 H4.6 M-4.2,6.4 H4.6" stroke="#cc0a0a" stroke-width="2.3" fill="none"/></g>
<g transform="translate(914,73)"><path d="M-4,4.2 L4,-4" stroke="#cc0a0a" stroke-width="2.9"/><path d="M7.4,-7.2 L6.2,-1.2 L1.2,-6.2 Z M-7.4,7.4 L-6.2,1.4 L-1.2,6.4 Z" fill="#cc0a0a"/></g>
<g transform="translate(937.5,73)"><circle cx="0.2" cy="0.2" r="6.3" fill="none" stroke="#a40808" stroke-width="2"/><path d="M0.2,0.8 L4,-3.6" stroke="#a40808" stroke-width="1.9"/></g>
<g transform="translate(961,73)"><path d="M7,-5.8 L-6,0.2 L7,6" fill="none" stroke="#a40808" stroke-width="2.2" stroke-linejoin="miter"/><path d="M1.6,-3.6 C2.8,-1.2 3.2,1.6 2.8,3.8" fill="none" stroke="#a40808" stroke-width="1.8"/></g>
<g transform="translate(984,73)"><path d="M-7,-0.2 H7.6" stroke="#8f8d8a" stroke-width="2.1"/><path d="M-5.4,-6.8 L0.4,-0.2 L2,6.6" stroke="#bdbbb8" stroke-width="2.6" fill="none" stroke-linecap="round"/><path d="M-5.4,-6.8 L0.4,-0.2 L2,6.6" stroke="#e4e3e1" stroke-width="1.1" fill="none" stroke-linecap="round"/><path d="M-2,-0.2 H2.6" stroke="#8f8d8a" stroke-width="2.1"/></g>
<g transform="translate(999.5,73)"><path d="M0,-7.2 V7.4" stroke="#e1dfdc" stroke-width="1"/></g>
<g transform="translate(1014.5,73)"><rect x="0" y="-5.6" width="6.2" height="6.2" fill="#f4f6fa" stroke="#34609a" stroke-width="2.1"/><rect x="-5.6" y="-0.2" width="6.2" height="6.2" fill="#fbf3f3" stroke="#b01218" stroke-width="2.1"/></g>
<g transform="translate(1032,73)"><path d="M-1.5,-1.7 H1.5 M-1.5,0.5 H1.5 M-1.5,2.7 H1.5" stroke="#d9d7d4" stroke-width="0.9"/></g>
<g transform="translate(1047,73)"><path d="M-4.5,-4.6 V4.6 M4.5,-4.6 V4.6" stroke="#dddbd8" stroke-width="3"/><circle cx="-4.5" cy="-5" r="2.6" fill="#c4c2bf"/><circle cx="4.5" cy="-5" r="2.6" fill="#c4c2bf"/><circle cx="-4.5" cy="5" r="2.6" fill="#c4c2bf"/><circle cx="4.5" cy="5" r="2.6" fill="#c4c2bf"/><path d="M-2,-2.2 H2.4 M-2.4,2.2 H2 M0.8,-3.6 L2.4,-2.2 L0.8,-0.8 M-0.8,0.8 L-2.4,2.2 L-0.8,3.6" stroke="#8f8d8a" stroke-width="1" fill="none"/></g>
<g transform="translate(1070,73)"><path d="M-4.8,-4.6 C-6.8,-1 -6.8,1 -4.8,4.6" stroke="#d6d4d1" stroke-width="2" fill="none"/><circle cx="-4.6" cy="-5" r="2.6" fill="#c4c2bf"/><circle cx="4.6" cy="-5" r="2.6" fill="#c4c2bf"/><circle cx="-4.8" cy="5" r="2.7" fill="#aeaca8"/><circle cx="4.6" cy="2.6" r="2.7" fill="#aeaca8"/><path d="M4.6,-3 V1" stroke="#d6d4d1" stroke-width="1.6"/><path d="M-2.4,-1.4 H2 M-0.8,-3 L-2.6,-1.4 L-0.8,0.2" stroke="#8f8d8a" stroke-width="1.2" fill="none"/></g>
<g transform="translate(1093,73)"><path d="M-5.6,-6 V6" stroke="#cfcdca" stroke-width="1.8"/><circle cx="-5.6" cy="-6" r="1.4" fill="#aeaca8"/><circle cx="-5.6" cy="6" r="1.4" fill="#aeaca8"/><path d="M-2.6,-6 V6" stroke="#c4c2bf" stroke-width="1.2"/><path d="M-1.4,3.4 L6.6,-6.4 M-1,5.4 L6.8,-3.4" stroke="#bdbbb8" stroke-width="1.5"/><path d="M7,1.2 L0,4.4 L7,7.4 Z" fill="#d0cecb" stroke="#bdbbb8" stroke-width="0.7"/></g>
<g transform="translate(1111.2,73)"><path d="M-2.4,-1.7 L-0.7,0.2 L-2.4,2.1 M0.6,-1.7 L2.3,0.2 L0.6,2.1" stroke="#1e1e1e" stroke-width="1.5" fill="none"/></g>
<g transform="translate(1119.5,73)"><path d="M-1.5,-1.7 H1.5 M-1.5,0.5 H1.5 M-1.5,2.7 H1.5" stroke="#d9d7d4" stroke-width="0.9"/></g>
<g transform="translate(1134.5,73)"><path d="M-7,-5.6 L6.8,-7 L6,5.8 L-7,7 Z" fill="#aaa8a5" stroke="#9c9a96" stroke-width="0.8"/><path d="M-4.6,-3.4 L4.6,-4.6 L3.8,3.6 L-4.6,4.6 Z" fill="#d9d8d5"/><ellipse cx="-0.2" cy="0" rx="3.8" ry="2.6" fill="#e9e8e6" stroke="#b7b5b2" stroke-width="0.8" transform="rotate(-35)"/></g>
<g transform="translate(1152.5,73.5)"><path d="M-2.5,-1.3 H2.5 L0,2.3 Z" fill="#c4c2bf"/></g>
<g transform="translate(1163.2,73)"><path d="M-2.4,-1.7 L-0.7,0.2 L-2.4,2.1 M0.6,-1.7 L2.3,0.2 L0.6,2.1" stroke="#1e1e1e" stroke-width="1.5" fill="none"/></g>
<g transform="translate(1172.5,73)"><path d="M-1.5,-1.7 H1.5 M-1.5,0.5 H1.5 M-1.5,2.7 H1.5" stroke="#d9d7d4" stroke-width="0.9"/></g>
<g transform="translate(1186,73)"><rect x="0.4" y="-7" width="6.2" height="6.2" rx="1.4" fill="#c4c2bf" stroke="#aeaca8" stroke-width="0.9"/><rect x="-6.8" y="0.2" width="6.2" height="6.2" rx="1.4" fill="#c4c2bf" stroke="#aeaca8" stroke-width="0.9"/><path d="M-5.6,-3 C-4.8,-5 -3.6,-5.8 -2,-5.8 M5.4,2.6 C4.8,4.6 3.6,5.4 2,5.6" stroke="#bdbbb8" stroke-width="1.7" fill="none"/><rect x="2.2" y="-5.2" width="2.4" height="2.4" fill="#ecebe9"/><rect x="-5" y="2" width="2.4" height="2.4" fill="#ecebe9"/></g>
</svg>
<div style="position:absolute;left:327.5px;top:39.2px;width:116.5px;height:15.4px;background:linear-gradient(#fefefe,#eeedeb);border:1px solid #bdb9b3;border-radius:3px;box-sizing:border-box;"></div>
<svg style="position:absolute;left:330.5px;top:40.5px" width="12" height="12" viewBox="0 0 12 12"><circle cx="7.6" cy="3.9" r="3.05" fill="#fdf1f1" stroke="#d42a30" stroke-width="1.4"/><rect x="0.95" y="4.9" width="7.9" height="6" rx="0.8" fill="#fbe9e9" fill-opacity="0.85" stroke="#d42a30" stroke-width="1.4"/></svg>
<div style="position:absolute;left:343.40px;top:38.00px;height:19px;line-height:19px;font-family:'Liberation Sans', sans-serif;font-size:10px;color:#454443;white-space:pre;transform:scaleX(0.9503);transform-origin:0 50%;-webkit-text-stroke:0.2px;">Sketcher</div>
<svg style="position:absolute;left:435px;top:39px" width="6" height="16" viewBox="0 0 6 16"><polygon points="3,5.9 5.1,8.4 0.9,8.4" fill="#4a4a48"/><polygon points="3,14.1 5.1,11.7 0.9,11.7" fill="#4a4a48"/></svg>
<div style="position:absolute;left:0px;top:86px;width:221px;height:575px;background:#f2f1f0;"></div>
<div style="position:absolute;left:1.70px;top:85.00px;height:19px;line-height:19px;font-family:'Liberation Sans', sans-serif;font-size:10px;color:#454443;white-space:pre;transform:scaleX(0.9521);transform-origin:0 50%;-webkit-text-stroke:0.2px;">Combo View</div>
<svg style="position:absolute;left:207.8px;top:90.2px" width="9" height="9" viewBox="0 0 9 9"><rect x="0.5" y="0.5" width="7.6" height="7.6" rx="1.6" fill="#b4b2af" stroke="#a19f9c" stroke-width="0.6"/><rect x="2.2" y="3.8" width="2.6" height="2.6" fill="#f4f4f3"/><path d="M4.2,2.2 H6.5 V4.6" fill="none" stroke="#f4f4f3" stroke-width="0.9"/></svg>
<div style="position:absolute;left:0.5px;top:104.8px;width:38.1px;height:17.4px;background:linear-gradient(#f1f0ee,#e1dfdc);border:1px solid #cdcac5;border-bottom:none;border-radius:3.5px 3.5px 0 0;box-sizing:border-box;"></div>
<div style="position:absolute;left:0.5px;top:121.7px;width:217px;height:1px;background:#cbc8c3;"></div>
<div style="position:absolute;left:38.6px;top:102.3px;width:32.2px;height:20.4px;background:#f8f7f6;border:1px solid #cbc8c3;border-bottom:none;border-radius:3.5px 3.5px 0 0;box-sizing:border-box;"></div>
<div style="position:absolute;left:5.70px;top:103.00px;height:19px;line-height:19px;font-family:'Liberation Sans', sans-serif;font-size:10px;color:#454443;white-space:pre;transform:scaleX(0.9876);transform-origin:0 50%;-webkit-text-stroke:0.2px;">Model</div>
<div style="position:absolute;left:43.90px;top:103.00px;height:19px;line-height:19px;font-family:'Liberation Sans', sans-serif;font-size:10px;color:#454443;white-space:pre;transform:scaleX(0.8646);transform-origin:0 50%;-webkit-text-stroke:0.2px;">Tasks</div>
<div style="position:absolute;left:0.5px;top:122px;width:1.5px;height:538px;background:#dddad6;"></div>
<div style="position:absolute;left:2px;top:122.4px;width:205.8px;height:537px;background:#cac7c3;"></div>
<div style="position:absolute;left:207.8px;top:122.4px;width:10px;height:537px;background:#efeeec;"></div>
<div style="position:absolute;left:208px;top:122.6px;width:9.3px;height:536.6px;background:#e2e0dd;border:1px solid #d6d3cf;border-radius:4.5px;box-sizing:border-box;"></div>
<div style="position:absolute;left:209px;top:131.8px;width:6.9px;height:444px;background:linear-gradient(90deg,#ffffff,#efedea);border:1px solid #bcb8b2;border-radius:3.5px;box-sizing:border-box;"></div>
<svg style="position:absolute;left:209.6px;top:126px" width="6" height="4"><polygon points="3,0.6 5.2,3.2 0.8,3.2" fill="#c9c6c1"/></svg><svg style="position:absolute;left:209.6px;top:653.3px" width="6" height="4"><polygon points="3,3.3 5.2,0.7 0.8,0.7" fill="#4a4a48"/></svg>
<div style="position:absolute;left:211.29999999999998px;top:348.8px;width:2.6px;height:1px;background:#b9b6b1;"></div>
<div style="position:absolute;left:211.29999999999998px;top:351.0px;width:2.6px;height:1px;background:#b9b6b1;"></div>
<div style="position:absolute;left:211.29999999999998px;top:353.2px;width:2.6px;height:1px;background:#b9b6b1;"></div>
<div style="position:absolute;left:78.2px;top:135.4px;width:52.8px;height:14.8px;background:linear-gradient(#fefefd,#ecebe8);border:1px solid #bab6b0;border-radius:3.5px;box-sizing:border-box;"></div>
<div style="position:absolute;left:93.10px;top:134.00px;height:19px;line-height:19px;font-family:'Liberation Sans', sans-serif;font-size:10px;color:#454443;white-space:pre;transform:scaleX(0.9035);transform-origin:0 50%;-webkit-text-stroke:0.2px;"><u style="text-decoration-color:#6e6d6b">C</u>lose</div>
<div style="position:absolute;left:7.2px;top:162.9px;width:194.8px;height:15px;background:linear-gradient(90deg,#ef7c4d 0%,#f3906a 25%,#f8aa8c 55%,#fdc8b4 100%);border-radius:3px 3px 0 0;"></div>
<svg style="position:absolute;left:13.4px;top:165.9px" width="9" height="10" viewBox="0 0 9 10"><path d="M0.7,0.9 H7.8 V9.2 H0.7 Z" fill="#f3f2f0" stroke="#c9b9b0" stroke-width="0.7"/><circle cx="6.8" cy="1.9" r="1.6" fill="#f6e640"/></svg>
<div style="position:absolute;left:25.60px;top:162.00px;height:18px;line-height:18px;font-family:'Liberation Sans', sans-serif;font-size:9px;color:#ffffff;white-space:pre;transform:scaleX(1.0130);transform-origin:0 50%;font-weight:700;">Solver messages</div>
<svg style="position:absolute;left:189.4px;top:165.1px" width="11" height="11" viewBox="0 0 11 11"><circle cx="5.5" cy="5.5" r="4.5" fill="#fdf1ec" stroke="#f9cdbb" stroke-width="0.7"/><path d="M3.6,5 L5.5,3.1 L7.4,5 M3.6,7.9 L5.5,6 L7.4,7.9" stroke="#e2683a" stroke-width="1.05" fill="none"/></svg>
<div style="position:absolute;left:7.2px;top:177.9px;width:194.8px;height:84.7px;background:#f2f1f0;"></div>
<div style="position:absolute;left:16.30px;top:184.00px;height:17px;line-height:17px;font-family:'Liberation Serif', serif;font-size:8.4px;color:#67666c;white-space:pre;transform:scaleX(1.0042);transform-origin:0 50%;-webkit-text-stroke:0.25px;">Under-constrained sketch with 5 degrees of</div>
<div style="position:absolute;left:16.30px;top:193.00px;height:17px;line-height:17px;font-family:'Liberation Serif', serif;font-size:8.4px;color:#67666c;white-space:pre;transform:scaleX(0.9898);transform-origin:0 50%;-webkit-text-stroke:0.25px;">freedom</div>
<div style="position:absolute;left:16.30px;top:207.00px;height:17px;line-height:17px;font-family:'Liberation Serif', serif;font-size:8.4px;color:#3aab4c;white-space:pre;transform:scaleX(0.9884);transform-origin:0 50%;-webkit-text-stroke:0.25px;">Solved in 0 sec</div>
<svg style="position:absolute;left:18.2px;top:240.1px" width="9" height="9" viewBox="0 0 10 10"><rect x="0.5" y="0.5" width="9" height="9" rx="1.7" fill="#ffffff" stroke="#bdb9b3" stroke-width="0.9"/></svg>
<div style="position:absolute;left:32.60px;top:235.00px;height:19px;line-height:19px;font-family:'Liberation Sans', sans-serif;font-size:10px;color:#454443;white-space:pre;transform:scaleX(0.9785);transform-origin:0 50%;-webkit-text-stroke:0.2px;">Auto Update</div>
<div style="position:absolute;left:107.3px;top:237.4px;width:85px;height:15.5px;background:linear-gradient(#fefefd,#ecebe8);border:1px solid #bab6b0;border-radius:3.5px;box-sizing:border-box;"></div>
<div style="position:absolute;left:133.90px;top:236.00px;height:19px;line-height:19px;font-family:'Liberation Sans', sans-serif;font-size:10px;color:#454443;white-space:pre;transform:scaleX(0.9831);transform-origin:0 50%;-webkit-text-stroke:0.2px;">Update</div>
<div style="position:absolute;left:7.2px;top:269.3px;width:194.8px;height:15px;background:linear-gradient(90deg,#ef7c4d 0%,#f3906a 25%,#f8aa8c 55%,#fdc8b4 100%);border-radius:3px 3px 0 0;"></div>
<svg style="position:absolute;left:13.4px;top:272.3px" width="9" height="10" viewBox="0 0 9 10"><path d="M0.7,0.9 H7.8 V9.2 H0.7 Z" fill="#f3f2f0" stroke="#c9b9b0" stroke-width="0.7"/><circle cx="6.8" cy="1.9" r="1.6" fill="#f6e640"/></svg>
<div style="position:absolute;left:25.60px;top:268.00px;height:18px;line-height:18px;font-family:'Liberation Sans', sans-serif;font-size:9px;color:#ffffff;white-space:pre;transform:scaleX(1.0454);transform-origin:0 50%;font-weight:700;">Edit controls</div>
<svg style="position:absolute;left:189.4px;top:271.5px" width="11" height="11" viewBox="0 0 11 11"><circle cx="5.5" cy="5.5" r="4.5" fill="#fdf1ec" stroke="#f9cdbb" stroke-width="0.7"/><path d="M3.6,5 L5.5,3.1 L7.4,5 M3.6,7.9 L5.5,6 L7.4,7.9" stroke="#e2683a" stroke-width="1.05" fill="none"/></svg>
<div style="position:absolute;left:7.2px;top:291.9px;width:194.8px;height:15px;background:linear-gradient(90deg,#ef7c4d 0%,#f3906a 25%,#f8aa8c 55%,#fdc8b4 100%);border-radius:3px 3px 0 0;"></div>
<svg style="position:absolute;left:13.4px;top:294.9px" width="9" height="10" viewBox="0 0 9 10"><path d="M0.7,0.9 H7.8 V9.2 H0.7 Z" fill="#f3f2f0" stroke="#c9b9b0" stroke-width="0.7"/><circle cx="6.8" cy="1.9" r="1.6" fill="#f6e640"/></svg>
<div style="position:absolute;left:25.60px;top:291.00px;height:18px;line-height:18px;font-family:'Liberation Sans', sans-serif;font-size:9px;color:#ffffff;white-space:pre;transform:scaleX(1.0419);transform-origin:0 50%;font-weight:700;">Constraints</div>
<svg style="position:absolute;left:189.4px;top:294.09999999999997px" width="11" height="11" viewBox="0 0 11 11"><circle cx="5.5" cy="5.5" r="4.5" fill="#fdf1ec" stroke="#f9cdbb" stroke-width="0.7"/><path d="M3.6,5 L5.5,3.1 L7.4,5 M3.6,7.9 L5.5,6 L7.4,7.9" stroke="#e2683a" stroke-width="1.05" fill="none"/></svg>
<div style="position:absolute;left:7.2px;top:306.9px;width:194.8px;height:182.3px;background:#f2f1f0;"></div>
<div style="position:absolute;left:16.70px;top:316.00px;height:19px;line-height:19px;font-family:'Liberation Sans', sans-serif;font-size:10px;color:#454443;white-space:pre;transform:scaleX(0.9840);transform-origin:0 50%;-webkit-text-stroke:0.2px;">Filter:</div>
<div style="position:absolute;left:107.3px;top:316.5px;width:84.8px;height:16px;background:linear-gradient(#fefefd,#ecebe8);border:1px solid #bab6b0;border-radius:3.5px;box-sizing:border-box;"></div>
<div style="position:absolute;left:110.80px;top:316.00px;height:19px;line-height:19px;font-family:'Liberation Sans', sans-serif;font-size:10px;color:#454443;white-space:pre;transform:scaleX(1.0078);transform-origin:0 50%;-webkit-text-stroke:0.2px;">All</div>
<svg style="position:absolute;left:183.2px;top:316.5px" width="6" height="16" viewBox="0 0 6 16"><polygon points="3,5.9 5.1,8.4 0.9,8.4" fill="#4a4a48"/><polygon points="3,14.1 5.1,11.7 0.9,11.7" fill="#4a4a48"/></svg>
<svg style="position:absolute;left:18.2px;top:340px;overflow:visible" width="9" height="9" viewBox="0 0 10 10"><rect x="0.5" y="0.5" width="9" height="9" rx="1.7" fill="#f08b5d" stroke="#d8704a" stroke-width="0.9"/><path d="M2.3,4.5 L4.4,7.4 L10.4,0.4" stroke="#5f3626" stroke-width="1.4" fill="none"/></svg>
<div style="position:absolute;left:32.80px;top:335.00px;height:19px;line-height:19px;font-family:'Liberation Sans', sans-serif;font-size:10px;color:#454443;white-space:pre;transform:scaleX(0.9915);transform-origin:0 50%;-webkit-text-stroke:0.2px;">Hide Internal Aligment</div>
<div style="position:absolute;left:16.3px;top:355.5px;width:168px;height:123.9px;background:#ffffff;border:1px solid #c1bdb7;box-sizing:border-box;"></div>
<svg style="position:absolute;left:20.9px;top:360.3px;overflow:visible" width="9" height="9" viewBox="0 0 10 10"><rect x="0.5" y="0.5" width="9" height="9" rx="1.7" fill="#f08b5d" stroke="#d8704a" stroke-width="0.9"/><path d="M2.3,4.5 L4.4,7.4 L10.4,0.4" stroke="#5f3626" stroke-width="1.4" fill="none"/></svg>
<svg style="position:absolute;left:36px;top:360.70px" width="16" height="8" viewBox="0 0 16 8"><circle cx="7.3" cy="4" r="2.65" fill="#c6060e"/></svg><div style="position:absolute;left:55.50px;top:356.00px;height:19px;line-height:19px;font-family:'Liberation Sans', sans-serif;font-size:10px;color:#454443;white-space:pre;transform:scaleX(0.9641);transform-origin:0 50%;-webkit-text-stroke:0.2px;">Constraint1</div>
<svg style="position:absolute;left:20.9px;top:377.15000000000003px;overflow:visible" width="9" height="9" viewBox="0 0 10 10"><rect x="0.5" y="0.5" width="9" height="9" rx="1.7" fill="#f08b5d" stroke="#d8704a" stroke-width="0.9"/><path d="M2.3,4.5 L4.4,7.4 L10.4,0.4" stroke="#5f3626" stroke-width="1.4" fill="none"/></svg>
<svg style="position:absolute;left:36px;top:377.55px" width="16" height="8" viewBox="0 0 16 8"><rect x="0" y="2.7" width="14.8" height="2.6" fill="#b50f18"/></svg><div style="position:absolute;left:55.50px;top:373.00px;height:19px;line-height:19px;font-family:'Liberation Sans', sans-serif;font-size:10px;color:#454443;white-space:pre;transform:scaleX(0.9641);transform-origin:0 50%;-webkit-text-stroke:0.2px;">Constraint2</div>
<svg style="position:absolute;left:20.9px;top:394.0px;overflow:visible" width="9" height="9" viewBox="0 0 10 10"><rect x="0.5" y="0.5" width="9" height="9" rx="1.7" fill="#f08b5d" stroke="#d8704a" stroke-width="0.9"/><path d="M2.3,4.5 L4.4,7.4 L10.4,0.4" stroke="#5f3626" stroke-width="1.4" fill="none"/></svg>
<svg style="position:absolute;left:36px;top:394.40px" width="16" height="8" viewBox="0 0 16 8"><circle cx="7.3" cy="4" r="2.65" fill="#c6060e"/></svg><div style="position:absolute;left:55.50px;top:390.00px;height:19px;line-height:19px;font-family:'Liberation Sans', sans-serif;font-size:10px;color:#454443;white-space:pre;transform:scaleX(0.9641);transform-origin:0 50%;-webkit-text-stroke:0.2px;">Constraint3</div>
<svg style="position:absolute;left:20.9px;top:410.85px;overflow:visible" width="9" height="9" viewBox="0 0 10 10"><rect x="0.5" y="0.5" width="9" height="9" rx="1.7" fill="#f08b5d" stroke="#d8704a" stroke-width="0.9"/><path d="M2.3,4.5 L4.4,7.4 L10.4,0.4" stroke="#5f3626" stroke-width="1.4" fill="none"/></svg>
<svg style="position:absolute;left:36px;top:411.25px" width="16" height="8" viewBox="0 0 16 8"><circle cx="7.3" cy="4" r="2.65" fill="#c6060e"/></svg><div style="position:absolute;left:55.50px;top:406.00px;height:19px;line-height:19px;font-family:'Liberation Sans', sans-serif;font-size:10px;color:#454443;white-space:pre;transform:scaleX(0.9641);transform-origin:0 50%;-webkit-text-stroke:0.2px;">Constraint4</div>
<svg style="position:absolute;left:20.9px;top:427.70000000000005px;overflow:visible" width="9" height="9" viewBox="0 0 10 10"><rect x="0.5" y="0.5" width="9" height="9" rx="1.7" fill="#f08b5d" stroke="#d8704a" stroke-width="0.9"/><path d="M2.3,4.5 L4.4,7.4 L10.4,0.4" stroke="#5f3626" stroke-width="1.4" fill="none"/></svg>
<svg style="position:absolute;left:36px;top:428.10px" width="16" height="8" viewBox="0 0 16 8"><rect x="0" y="2.7" width="14.8" height="2.6" fill="#b50f18"/></svg><div style="position:absolute;left:55.50px;top:423.00px;height:19px;line-height:19px;font-family:'Liberation Sans', sans-serif;font-size:10px;color:#454443;white-space:pre;transform:scaleX(0.9641);transform-origin:0 50%;-webkit-text-stroke:0.2px;">Constraint5</div>
<svg style="position:absolute;left:20.9px;top:444.55px;overflow:visible" width="9" height="9" viewBox="0 0 10 10"><rect x="0.5" y="0.5" width="9" height="9" rx="1.7" fill="#f08b5d" stroke="#d8704a" stroke-width="0.9"/><path d="M2.3,4.5 L4.4,7.4 L10.4,0.4" stroke="#5f3626" stroke-width="1.4" fill="none"/></svg>
<svg style="position:absolute;left:36px;top:444.95px" width="16" height="8" viewBox="0 0 16 8"><circle cx="7.3" cy="4" r="2.65" fill="#c6060e"/></svg><div style="position:absolute;left:55.50px;top:440.00px;height:19px;line-height:19px;font-family:'Liberation Sans', sans-serif;font-size:10px;color:#454443;white-space:pre;transform:scaleX(0.9641);transform-origin:0 50%;-webkit-text-stroke:0.2px;">Constraint6</div>
<svg style="position:absolute;left:20.9px;top:461.40000000000003px;overflow:visible" width="9" height="9" viewBox="0 0 10 10"><rect x="0.5" y="0.5" width="9" height="9" rx="1.7" fill="#f08b5d" stroke="#d8704a" stroke-width="0.9"/><path d="M2.3,4.5 L4.4,7.4 L10.4,0.4" stroke="#5f3626" stroke-width="1.4" fill="none"/></svg>
<svg style="position:absolute;left:36px;top:461.80px" width="16" height="8" viewBox="0 0 16 8"><circle cx="7.3" cy="4" r="2.65" fill="#c6060e"/></svg><div style="position:absolute;left:55.50px;top:457.00px;height:19px;line-height:19px;font-family:'Liberation Sans', sans-serif;font-size:10px;color:#454443;white-space:pre;transform:scaleX(0.9641);transform-origin:0 50%;-webkit-text-stroke:0.2px;">Constraint7</div>
<div style="position:absolute;left:21.2px;top:477.7px;width:8.6px;height:1.2px;background:#f0936a;border-radius:1.5px 1.5px 0 0;"></div>
<div style="position:absolute;left:184.6px;top:356px;width:7.6px;height:123.2px;background:#e0deda;border-radius:4.5px;border:1px solid #d0cdc9;box-sizing:border-box;"></div>
<div style="position:absolute;left:184.6px;top:363.8px;width:7.6px;height:39.39999999999998px;background:linear-gradient(90deg,#ffffff,#edebe8);border:1px solid #b8b4ae;border-radius:4.5px;box-sizing:border-box;"></div>
<svg style="position:absolute;left:185.4px;top:358.6px" width="6" height="4"><polygon points="3,0.6 5.2,3.2 0.8,3.2" fill="#c9c6c1"/></svg><svg style="position:absolute;left:185.4px;top:473px" width="6" height="4"><polygon points="3,3.3 5.2,0.7 0.8,0.7" fill="#4a4a48"/></svg>
<div style="position:absolute;left:187.1px;top:379.8px;width:2.6px;height:1px;background:#b9b6b1;"></div>
<div style="position:absolute;left:187.1px;top:382.0px;width:2.6px;height:1px;background:#b9b6b1;"></div>
<div style="position:absolute;left:187.1px;top:384.2px;width:2.6px;height:1px;background:#b9b6b1;"></div>
<div style="position:absolute;left:7.2px;top:494.6px;width:194.8px;height:15px;background:linear-gradient(90deg,#ef7c4d 0%,#f3906a 25%,#f8aa8c 55%,#fdc8b4 100%);border-radius:3px 3px 0 0;"></div>
<svg style="position:absolute;left:13.4px;top:497.6px" width="9" height="10" viewBox="0 0 9 10"><path d="M0.7,0.9 H7.8 V9.2 H0.7 Z" fill="#f3f2f0" stroke="#c9b9b0" stroke-width="0.7"/><circle cx="6.8" cy="1.9" r="1.6" fill="#f6e640"/></svg>
<div style="position:absolute;left:25.60px;top:494.00px;height:18px;line-height:18px;font-family:'Liberation Sans', sans-serif;font-size:9px;color:#ffffff;white-space:pre;transform:scaleX(1.0371);transform-origin:0 50%;font-weight:700;">Elements</div>
<svg style="position:absolute;left:189.4px;top:496.8px" width="11" height="11" viewBox="0 0 11 11"><circle cx="5.5" cy="5.5" r="4.5" fill="#fdf1ec" stroke="#f9cdbb" stroke-width="0.7"/><path d="M3.6,5 L5.5,3.1 L7.4,5 M3.6,7.9 L5.5,6 L7.4,7.9" stroke="#e2683a" stroke-width="1.05" fill="none"/></svg>
<div style="position:absolute;left:7.2px;top:509.5px;width:194.8px;height:150px;background:#f2f1f0;"></div>
<div style="position:absolute;left:16.50px;top:518.00px;height:19px;line-height:19px;font-family:'Liberation Sans', sans-serif;font-size:10px;color:#454443;white-space:pre;transform:scaleX(0.9363);transform-origin:0 50%;-webkit-text-stroke:0.35px;">Type:</div>
<div style="position:absolute;left:107.3px;top:519.6px;width:84.8px;height:16px;background:#f1f0ee;border:1px solid #d3d0cc;border-radius:3.5px;box-sizing:border-box;"></div>
<div style="position:absolute;left:110.80px;top:519.00px;height:19px;line-height:19px;font-family:'Liberation Sans', sans-serif;font-size:10px;color:#b9b6b1;white-space:pre;transform:scaleX(0.8906);transform-origin:0 50%;-webkit-text-stroke:0.2px;">Edge</div>
<svg style="position:absolute;left:183.2px;top:519.7px" width="6" height="16" viewBox="0 0 6 16"><polygon points="3,5.9 5.1,8.4 0.9,8.4" fill="#bdbab5"/><polygon points="3,14.1 5.1,11.7 0.9,11.7" fill="#bdbab5"/></svg>
<div style="position:absolute;left:16.3px;top:540.5px;width:168px;height:119.5px;background:#ffffff;border:1px solid #c1bdb7;border-bottom:none;box-sizing:border-box;"></div>
<svg style="position:absolute;left:18px;top:541.00px" width="17" height="17" viewBox="18 541 17 17"><line x1="21.7" y1="554.1" x2="31.4" y2="544.2" stroke="#56a62c" stroke-width="1.8"/><circle cx="21.7" cy="554.1" r="2.55" fill="#cc1018"/><circle cx="31.4" cy="544.2" r="2.55" fill="#cc1018"/></svg>
<div style="position:absolute;left:39.00px;top:540.00px;height:19px;line-height:19px;font-family:'Liberation Sans', sans-serif;font-size:10px;color:#454443;white-space:pre;transform:scaleX(0.8993);transform-origin:0 50%;-webkit-text-stroke:0.2px;">1-Line</div>
<svg style="position:absolute;left:18px;top:557.85px" width="17" height="17" viewBox="18 541 17 17"><line x1="21.7" y1="554.1" x2="31.4" y2="544.2" stroke="#56a62c" stroke-width="1.8"/><circle cx="21.7" cy="554.1" r="2.55" fill="#cc1018"/><circle cx="31.4" cy="544.2" r="2.55" fill="#cc1018"/></svg>
<div style="position:absolute;left:39.00px;top:557.00px;height:19px;line-height:19px;font-family:'Liberation Sans', sans-serif;font-size:10px;color:#454443;white-space:pre;transform:scaleX(0.8993);transform-origin:0 50%;-webkit-text-stroke:0.2px;">2-Line</div>
<svg style="position:absolute;left:18px;top:574.70px" width="17" height="17" viewBox="18 541 17 17"><line x1="21.7" y1="554.1" x2="31.4" y2="544.2" stroke="#56a62c" stroke-width="1.8"/><circle cx="21.7" cy="554.1" r="2.55" fill="#cc1018"/><circle cx="31.4" cy="544.2" r="2.55" fill="#cc1018"/></svg>
<div style="position:absolute;left:39.00px;top:574.00px;height:19px;line-height:19px;font-family:'Liberation Sans', sans-serif;font-size:10px;color:#454443;white-space:pre;transform:scaleX(0.8993);transform-origin:0 50%;-webkit-text-stroke:0.2px;">3-Line</div>
<svg style="position:absolute;left:18px;top:591.55px" width="17" height="17" viewBox="18 541 17 17"><line x1="21.7" y1="554.1" x2="31.4" y2="544.2" stroke="#56a62c" stroke-width="1.8"/><circle cx="21.7" cy="554.1" r="2.55" fill="#cc1018"/><circle cx="31.4" cy="544.2" r="2.55" fill="#cc1018"/></svg>
<div style="position:absolute;left:39.00px;top:591.00px;height:19px;line-height:19px;font-family:'Liberation Sans', sans-serif;font-size:10px;color:#454443;white-space:pre;transform:scaleX(0.8993);transform-origin:0 50%;-webkit-text-stroke:0.2px;">4-Line</div>
<svg style="position:absolute;left:18px;top:608.40px" width="17" height="17" viewBox="18 541 17 17"><line x1="21.7" y1="554.1" x2="31.4" y2="544.2" stroke="#56a62c" stroke-width="1.8"/><circle cx="21.7" cy="554.1" r="2.55" fill="#cc1018"/><circle cx="31.4" cy="544.2" r="2.55" fill="#cc1018"/></svg>
<div style="position:absolute;left:39.00px;top:608.00px;height:19px;line-height:19px;font-family:'Liberation Sans', sans-serif;font-size:10px;color:#454443;white-space:pre;transform:scaleX(0.8993);transform-origin:0 50%;-webkit-text-stroke:0.2px;">5-Line</div>
<svg style="position:absolute;left:18px;top:625.25px" width="17" height="17" viewBox="18 541 17 17"><line x1="21.7" y1="554.1" x2="31.4" y2="544.2" stroke="#56a62c" stroke-width="1.8"/><circle cx="21.7" cy="554.1" r="2.55" fill="#cc1018"/><circle cx="31.4" cy="544.2" r="2.55" fill="#cc1018"/></svg>
<div style="position:absolute;left:39.00px;top:625.00px;height:19px;line-height:19px;font-family:'Liberation Sans', sans-serif;font-size:10px;color:#454443;white-space:pre;transform:scaleX(0.8993);transform-origin:0 50%;-webkit-text-stroke:0.2px;">6-Line</div>
<svg style="position:absolute;left:18px;top:642.10px" width="17" height="17" viewBox="18 541 17 17"><line x1="21.7" y1="554.1" x2="31.4" y2="544.2" stroke="#56a62c" stroke-width="1.8"/><circle cx="21.7" cy="554.1" r="2.55" fill="#cc1018"/><circle cx="31.4" cy="544.2" r="2.55" fill="#cc1018"/></svg>
<div style="position:absolute;left:39.00px;top:642.00px;height:19px;line-height:19px;font-family:'Liberation Sans', sans-serif;font-size:10px;color:#454443;white-space:pre;transform:scaleX(0.8993);transform-origin:0 50%;-webkit-text-stroke:0.2px;">7-Line</div>
<div style="position:absolute;left:184.6px;top:541px;width:7.6px;height:119px;background:#e0deda;border-radius:4.5px;border:1px solid #d0cdc9;box-sizing:border-box;"></div>
<div style="position:absolute;left:184.6px;top:548.7px;width:7.6px;height:93.29999999999995px;background:linear-gradient(90deg,#ffffff,#edebe8);border:1px solid #b8b4ae;border-radius:4.5px;box-sizing:border-box;"></div>
<svg style="position:absolute;left:185.4px;top:543.6px" width="6" height="4"><polygon points="3,0.6 5.2,3.2 0.8,3.2" fill="#c9c6c1"/></svg><div style="position:absolute;left:187.1px;top:592.3px;width:2.6px;height:1px;background:#b9b6b1;"></div>
<div style="position:absolute;left:187.1px;top:594.5px;width:2.6px;height:1px;background:#b9b6b1;"></div>
<div style="position:absolute;left:187.1px;top:596.7px;width:2.6px;height:1px;background:#b9b6b1;"></div>
<div style="position:absolute;left:0px;top:659.6px;width:221px;height:2px;background:#f2f1f0;"></div>
<div style="position:absolute;left:0.5px;top:659.2px;width:218.5px;height:1.3px;background:#cdcac6;"></div>
<div style="position:absolute;left:219px;top:86px;width:2px;height:555px;background:#f2f1f0;"></div>
<svg style="position:absolute;left:221px;top:86px" width="979" height="554" viewBox="221 86 979 554">
<defs><linearGradient id="vg" x1="0" y1="0" x2="0" y2="1"><stop offset="0" stop-color="#333366"/><stop offset="1" stop-color="#9898b2"/></linearGradient></defs>
<rect x="221" y="86" width="979" height="554" fill="url(#vg)"/>
<rect x="221" y="86" width="979" height="1" fill="#ffffff" opacity="0.22"/><rect x="221" y="86" width="1" height="554" fill="#ffffff" opacity="0.4"/>
<line x1="285.9" y1="83.45" x2="285.9" y2="563.5" stroke="#b9b9c6" stroke-width="1" stroke-dasharray="2.55 2.62" opacity="0.82" fill="none"/>
<line x1="393.7" y1="83.45" x2="393.7" y2="563.5" stroke="#b9b9c6" stroke-width="1" stroke-dasharray="2.55 2.62" opacity="0.82" fill="none"/>
<line x1="501.5" y1="83.45" x2="501.5" y2="563.5" stroke="#b9b9c6" stroke-width="1" stroke-dasharray="2.55 2.62" opacity="0.82" fill="none"/>
<line x1="717.1" y1="83.45" x2="717.1" y2="563.5" stroke="#b9b9c6" stroke-width="1" stroke-dasharray="2.55 2.62" opacity="0.82" fill="none"/>
<line x1="824.9" y1="83.45" x2="824.9" y2="563.5" stroke="#b9b9c6" stroke-width="1" stroke-dasharray="2.55 2.62" opacity="0.82" fill="none"/>
<line x1="932.7" y1="83.45" x2="932.7" y2="563.5" stroke="#b9b9c6" stroke-width="1" stroke-dasharray="2.55 2.62" opacity="0.82" fill="none"/>
<line x1="1040.5" y1="83.45" x2="1040.5" y2="563.5" stroke="#b9b9c6" stroke-width="1" stroke-dasharray="2.55 2.62" opacity="0.82" fill="none"/>
<line x1="609.3" y1="504" x2="609.3" y2="563.5" stroke="#b9b9c6" stroke-width="1" stroke-dasharray="2.55 2.62" opacity="0.82" fill="none"/>
<line x1="220.65" y1="132.4" x2="1146" y2="132.4" stroke="#b9b9c6" stroke-width="1" stroke-dasharray="2.55 2.62" opacity="0.82" fill="none"/>
<line x1="220.65" y1="240.1" x2="1146" y2="240.1" stroke="#b9b9c6" stroke-width="1" stroke-dasharray="2.55 2.62" opacity="0.82" fill="none"/>
<line x1="220.65" y1="455.5" x2="1146" y2="455.5" stroke="#b9b9c6" stroke-width="1" stroke-dasharray="2.55 2.62" opacity="0.82" fill="none"/>
<line x1="220.65" y1="563.2" x2="1146" y2="563.2" stroke="#b9b9c6" stroke-width="1" stroke-dasharray="2.55 2.62" opacity="0.82" fill="none"/>
<line x1="1043.8" y1="348.1" x2="1146" y2="348.1" stroke="#b9b9c6" stroke-width="1" stroke-dasharray="2.55 2.62" opacity="0.82" fill="none"/>
<line x1="221" y1="347.9" x2="1043.8" y2="347.9" stroke="#c75f6d" stroke-width="1.25"/>
<line x1="555.5" y1="348.55" x2="663" y2="348.55" stroke="#4d3b63" stroke-width="1.1"/>
<line x1="609.3" y1="86" x2="609.3" y2="504" stroke="#5fc97a" stroke-width="1.4"/>
<path d="M495,272.3 L501,276.2 L495,280.5" stroke="#ff2a0a" stroke-width="1.3" fill="none" stroke-linecap="round" opacity="0.92"/>
<path d="M723.8,272.3 L718,276.2 L723.8,280.5" stroke="#ff2a0a" stroke-width="1.3" fill="none" stroke-linecap="round" opacity="0.92"/>
<line x1="485.9" y1="276.1" x2="609.3" y2="276.1" stroke="#ffffff" stroke-width="2.3" stroke-linecap="round" fill="none"/>
<line x1="609.3" y1="276.1" x2="732.8" y2="276.1" stroke="#ffffff" stroke-width="2.3" stroke-linecap="round" fill="none"/>
<line x1="485.9" y1="276.1" x2="460.5" y2="456.2" stroke="#ffffff" stroke-width="2.3" stroke-linecap="round" fill="none"/>
<line x1="460.5" y1="456.2" x2="567.4" y2="456.2" stroke="#ffffff" stroke-width="2.3" stroke-linecap="round" fill="none"/>
<line x1="567.4" y1="456.2" x2="579.8" y2="370.8" stroke="#ffffff" stroke-width="2.3" stroke-linecap="round" fill="none"/>
<line x1="579.8" y1="370.8" x2="611.4" y2="375.3" stroke="#ffffff" stroke-width="2.3" stroke-linecap="round" fill="none"/>
<line x1="611.4" y1="375.3" x2="600.6" y2="453.7" stroke="#ffffff" stroke-width="2.3" stroke-linecap="round" fill="none"/>
<line x1="600.6" y1="453.7" x2="708" y2="453.7" stroke="#ffffff" stroke-width="2.3" stroke-linecap="round" fill="none"/>
<line x1="708" y1="453.7" x2="732.8" y2="276.1" stroke="#ffffff" stroke-width="2.3" stroke-linecap="round" fill="none"/>
<line x1="590.2" y1="297" x2="579.8" y2="370.8" stroke="#f08432" stroke-width="1.5"/>
<line x1="621.9" y1="302" x2="611.4" y2="375.3" stroke="#f08432" stroke-width="1.5"/>
<line x1="607.6" y1="316.4" x2="591" y2="314" stroke="#f08432" stroke-width="1.5"/>
<polygon points="587.4,313.5 595.2,310.8 594.2,318.2" fill="#f08432"/>
<g transform="rotate(8 612 325)"><text x="611.8" y="322.2" font-family="Liberation Sans, sans-serif" font-style="italic" font-size="14.3" fill="#d9772f" textLength="43.6" lengthAdjust="spacingAndGlyphs">60 mm</text><ellipse cx="615.6" cy="317.4" rx="3.3" ry="4" fill="none" stroke="#d9772f" stroke-width="1.1"/><path d="M612.2,317.6 L619.6,316.2 M613,320.2 L618.6,314.4" stroke="#d9772f" stroke-width="1"/></g>
<path d="M470.8,382.9 A74,74 0 0 1 511.4,402.5" stroke="#f08432" stroke-width="1.5" fill="none"/>
<path d="M520.4,412.7 A74,74 0 0 1 534.5,456.2" stroke="#f08432" stroke-width="1.5" fill="none"/>
<line x1="530" y1="456.4" x2="539" y2="456.4" stroke="#f08432" stroke-width="1.6"/>
<line x1="470.9" y1="379.5" x2="469.9" y2="386.5" stroke="#f08432" stroke-width="1.6"/>
<text x="503.5" y="413" font-family="Liberation Sans, sans-serif" font-size="14.5" fill="#c47a50" stroke="#c47a50" stroke-width="0.3" textLength="24.5" lengthAdjust="spacingAndGlyphs">82 °</text>
<circle cx="485.9" cy="276.1" r="2.4" fill="#ff2a0a"/>
<circle cx="732.8" cy="276.1" r="2.4" fill="#ff2a0a"/>
<circle cx="460.5" cy="456.2" r="2.4" fill="#ff2a0a"/>
<circle cx="567.4" cy="456.2" r="2.4" fill="#ff2a0a"/>
<circle cx="579.8" cy="370.8" r="2.4" fill="#ff2a0a"/>
<circle cx="611.4" cy="375.3" r="2.4" fill="#ff2a0a"/>
<circle cx="600.6" cy="453.7" r="2.4" fill="#ff2a0a"/>
<circle cx="708" cy="453.7" r="2.4" fill="#ff2a0a"/>
<circle cx="609.3" cy="348" r="2.3" fill="#e6201a"/>
<path d="M604.2,272.7 L608.1,276.3 L604.2,280 M613.3,272.7 L609.5,276.3 L613.3,280" stroke="#ff2a0a" stroke-width="2" fill="none"/>
<line x1="604" y1="262.9" x2="613.3" y2="262.9" stroke="#dc3a22" stroke-width="1.9"/>
<path d="M451.4,364.7 L457.0,359.5 M453.79999999999995,367.0 L459.4,361.7" stroke="#ff2a0a" stroke-width="1.8" stroke-linecap="round" fill="none"/>
<text x="461.2" y="368.5" font-family="Liberation Sans, sans-serif" font-weight="bold" font-size="6.8" fill="#d92a1a" stroke="#d92a1a" stroke-width="0.25" textLength="6.8" lengthAdjust="spacingAndGlyphs">14</text>
<path d="M725.6,367.3 L731.2,362.1 M728.0,369.6 L733.6,364.3" stroke="#ff2a0a" stroke-width="1.8" stroke-linecap="round" fill="none"/>
<text x="735.6" y="371.3" font-family="Liberation Sans, sans-serif" font-weight="bold" font-size="6.8" fill="#d92a1a" stroke="#d92a1a" stroke-width="0.25" textLength="6.8" lengthAdjust="spacingAndGlyphs">12</text>
<path d="M585.0,388.2 L594.0,388.2" stroke="#ff2a0a" stroke-width="2" fill="none"/><path d="M589.5,388.2 L589.5,381.4" stroke="#ff2a0a" stroke-width="2.4" fill="none"/>
<text x="595.4" y="390.4" font-family="Liberation Sans, sans-serif" font-weight="bold" font-size="6.8" fill="#d92a1a" stroke="#d92a1a" stroke-width="0.25" textLength="6.4" lengthAdjust="spacingAndGlyphs">17</text>
<path d="M573.4,411.2 L582.4,411.2" stroke="#ff2a0a" stroke-width="2" fill="none"/><path d="M577.9,411.2 L577.9,404.4" stroke="#ff2a0a" stroke-width="2.4" fill="none"/>
<text x="585.6" y="413.4" font-family="Liberation Sans, sans-serif" font-weight="bold" font-size="6.8" fill="#d92a1a" stroke="#d92a1a" stroke-width="0.25" textLength="5" lengthAdjust="spacingAndGlyphs">17</text>
<path d="M579.2,412.8 L584.8000000000001,407.6 M581.6,415.1 L587.2,409.8" stroke="#ff2a0a" stroke-width="1.8" stroke-linecap="round" fill="none"/>
<text x="588.1" y="416.3" font-family="Liberation Sans, sans-serif" font-weight="bold" font-size="6.8" fill="#d92a1a" stroke="#d92a1a" stroke-width="0.25" textLength="18.1" lengthAdjust="spacingAndGlyphs">13, 12</text>
<path d="M573.6,422.55 L579.2,417.35 M576.0,424.85 L581.6,419.55" stroke="#ff2a0a" stroke-width="1.8" stroke-linecap="round" fill="none"/>
<text x="583.6" y="426" font-family="Liberation Sans, sans-serif" font-weight="bold" font-size="6.8" fill="#d92a1a" stroke="#d92a1a" stroke-width="0.25" textLength="18.6" lengthAdjust="spacingAndGlyphs">13, 14</text>
<path d="M506.4,462.0 L512.9,462.0 M506.4,465.4 L512.9,465.4" stroke="#ff2a0a" stroke-width="1.9" fill="none"/>
<text x="515.5" y="468.8" font-family="Liberation Sans, sans-serif" font-weight="bold" font-size="6.8" fill="#d92a1a" stroke="#d92a1a" stroke-width="0.25" textLength="7.1" lengthAdjust="spacingAndGlyphs">19</text>
<line x1="505.1" y1="475.9" x2="514.1" y2="475.9" stroke="#dc3a2c" stroke-width="1.9"/>
<path d="M646.75,460.5 L653.25,460.5 M646.75,463.9 L653.25,463.9" stroke="#ff2a0a" stroke-width="1.9" fill="none"/>
<text x="656" y="467.2" font-family="Liberation Sans, sans-serif" font-weight="bold" font-size="6.8" fill="#d92a1a" stroke="#d92a1a" stroke-width="0.25" textLength="6.9" lengthAdjust="spacingAndGlyphs">19</text>
<line x1="645.7" y1="474.2" x2="654.7" y2="474.2" stroke="#dc3a2c" stroke-width="1.9"/>
<text x="525" y="511.4" font-family="Liberation Mono, monospace" font-size="10.4" fill="#2e2ef0" textLength="87.5" lengthAdjust="spacing">(-86.5,-153.9)</text>
<text x="1173.9" y="594" font-family="Liberation Sans, sans-serif" font-size="9" fill="#20202a">z</text>
<text x="1192.6" y="613" font-family="Liberation Sans, sans-serif" font-size="9" fill="#20202a">x</text>
<text x="1173.9" y="613" font-family="Liberation Sans, sans-serif" font-size="9" fill="#20202a">y</text>
<line x1="1172" y1="612" x2="1172" y2="598" stroke="#2a2a98" stroke-width="1.3"/><polygon points="1172,593 1169.7,599.5 1174.3,599.5" fill="#2a2a98"/>
<line x1="1172" y1="612" x2="1186" y2="612" stroke="#a62e38" stroke-width="1.3"/><polygon points="1191.5,612 1185,609.8 1185,614.2" fill="#a62e38"/>
<circle cx="1172" cy="612.3" r="1.2" fill="#1f9a2a"/>
</svg>
<div style="position:absolute;left:219px;top:640px;width:981px;height:22px;background:#f2f1f0;"></div>
<div style="position:absolute;left:0px;top:661px;width:1200px;height:21px;background:#f2f1f0;"></div>
<div style="position:absolute;left:0px;top:661px;width:1200px;height:1px;background:#dcdad7;"></div>
<div style="position:absolute;left:222px;top:640px;width:87.5px;height:19px;background:linear-gradient(#e2e0dd,#efeeec);border:1px solid #d2cfcb;border-top:none;border-radius:0 0 3px 3px;box-sizing:border-box;"></div>
<div style="position:absolute;left:400.5px;top:640px;width:79.5px;height:19px;background:linear-gradient(#e2e0dd,#efeeec);border:1px solid #d2cfcb;border-top:none;border-radius:0 0 3px 3px;box-sizing:border-box;"></div>
<div style="position:absolute;left:309.7px;top:640px;width:90.8px;height:21px;background:#fbfbfa;border:1px solid #c6c3be;border-top:none;border-radius:0 0 3px 3px;box-sizing:border-box;"></div>
<div style="position:absolute;left:241.70px;top:641.00px;height:19px;line-height:19px;font-family:'Liberation Sans', sans-serif;font-size:10px;color:#454443;white-space:pre;transform:scaleX(0.9622);transform-origin:0 50%;-webkit-text-stroke:0.2px;">Start page</div>
<div style="position:absolute;left:330.00px;top:641.00px;height:19px;line-height:19px;font-family:'Liberation Sans', sans-serif;font-size:10px;color:#454443;white-space:pre;transform:scaleX(0.9408);transform-origin:0 50%;-webkit-text-stroke:0.2px;">bench2 : 1*</div>
<div style="position:absolute;left:421.00px;top:641.00px;height:19px;line-height:19px;font-family:'Liberation Sans', sans-serif;font-size:10px;color:#454443;white-space:pre;transform:scaleX(0.9728);transform-origin:0 50%;-webkit-text-stroke:0.2px;">bench2*</div>
<svg style="position:absolute;left:293.5px;top:646px" width="9" height="9" viewBox="0 0 9 9"><path d="M1.6,1.6 L7.4,7.4 M7.4,1.6 L1.6,7.4" stroke="#555553" stroke-width="2.2"/></svg>
<svg style="position:absolute;left:384.8px;top:646px" width="9" height="9" viewBox="0 0 9 9"><path d="M1.6,1.6 L7.4,7.4 M7.4,1.6 L1.6,7.4" stroke="#555553" stroke-width="2.2"/></svg>
<svg style="position:absolute;left:463.9px;top:646px" width="9" height="9" viewBox="0 0 9 9"><path d="M1.6,1.6 L7.4,7.4 M7.4,1.6 L1.6,7.4" stroke="#555553" stroke-width="2.2"/></svg>
<svg style="position:absolute;left:226px;top:644.5px" width="11" height="11" viewBox="0 0 11 11"><path d="M0.6,0.8 H6.6 V3 H3 V4.6 H5.6 V6.6 H3 V10.2 H0.6 Z" fill="#cc1f22"/><circle cx="6.9" cy="7" r="2.7" fill="#3b62a8"/><circle cx="6.9" cy="7" r="1" fill="#dfe6f2"/><path d="M6.9,3.6 V10.4 M3.5,7 H10.3 M4.5,4.6 L9.3,9.4 M9.3,4.6 L4.5,9.4" stroke="#3b62a8" stroke-width="0.9"/><circle cx="6.9" cy="7" r="1" fill="#dfe6f2"/></svg>
<svg style="position:absolute;left:314px;top:644.5px" width="11" height="11" viewBox="0 0 11 11"><path d="M0.6,0.8 H6.6 V3 H3 V4.6 H5.6 V6.6 H3 V10.2 H0.6 Z" fill="#cc1f22"/><circle cx="6.9" cy="7" r="2.7" fill="#3b62a8"/><circle cx="6.9" cy="7" r="1" fill="#dfe6f2"/><path d="M6.9,3.6 V10.4 M3.5,7 H10.3 M4.5,4.6 L9.3,9.4 M9.3,4.6 L4.5,9.4" stroke="#3b62a8" stroke-width="0.9"/><circle cx="6.9" cy="7" r="1" fill="#dfe6f2"/></svg>
<svg style="position:absolute;left:405.5px;top:645px" width="11" height="10" viewBox="0 0 11 10"><rect x="0.5" y="0.5" width="10" height="8.2" fill="#f6f6f5" stroke="#6f6d69" stroke-width="0.9"/><path d="M0.5,2.6 H10.5 M0.5,4.6 H10.5 M0.5,6.6 H10.5 M3.4,0.5 V8.7" stroke="#7a7875" stroke-width="0.8"/><rect x="0.9" y="0.9" width="9.2" height="1.3" fill="#7f7d79"/></svg>
<div style="position:absolute;left:4.20px;top:662.00px;height:19px;line-height:19px;font-family:'Liberation Sans', sans-serif;font-size:10px;color:#454443;white-space:pre;transform:scaleX(0.9445);transform-origin:0 50%;-webkit-text-stroke:0.2px;">Preselected:</div>
<div style="position:absolute;left:60.00px;top:662.00px;height:19px;line-height:19px;font-family:'Liberation Sans', sans-serif;font-size:10px;color:#454443;white-space:pre;transform:scaleX(0.9448);transform-origin:0 50%;-webkit-text-stroke:0.2px;">Unnamed.Sketch004.Vertex1</div>
<div style="position:absolute;left:186.60px;top:662.00px;height:19px;line-height:19px;font-family:'Liberation Sans', sans-serif;font-size:10px;color:#454443;white-space:pre;transform:scaleX(0.9432);transform-origin:0 50%;-webkit-text-stroke:0.2px;">(-85.902977,-0.010986,-152.674118)</div>
<div style="position:absolute;left:1058.00px;top:662.00px;height:19px;line-height:19px;font-family:'Liberation Sans', sans-serif;font-size:9.5px;color:#454443;white-space:pre;transform:scaleX(0.8974);transform-origin:0 50%;-webkit-text-stroke:0.2px;">CAD</div>
<div style="position:absolute;left:1094.90px;top:662.00px;height:19px;line-height:19px;font-family:'Liberation Sans', sans-serif;font-size:9.5px;color:#454443;white-space:pre;transform:scaleX(0.9812);transform-origin:0 50%;-webkit-text-stroke:0.2px;">908,43 mm x 514,04 mm</div>
<svg style="position:absolute;left:1046px;top:667px" width="9" height="10" viewBox="0 0 9 10"><rect x="1.5" y="1.2" width="5.6" height="7.4" rx="2.6" fill="#f8f8f7" stroke="#4a4947" stroke-width="1.15"/><line x1="4.3" y1="1.4" x2="4.3" y2="4.2" stroke="#4a4947" stroke-width="0.9"/></svg>
<svg style="position:absolute;left:1080px;top:670px" width="7" height="5" viewBox="0 0 7 5"><polygon points="0.8,1.3 5.2,1.3 3,4" fill="#6b6966"/></svg>
</body></html>
